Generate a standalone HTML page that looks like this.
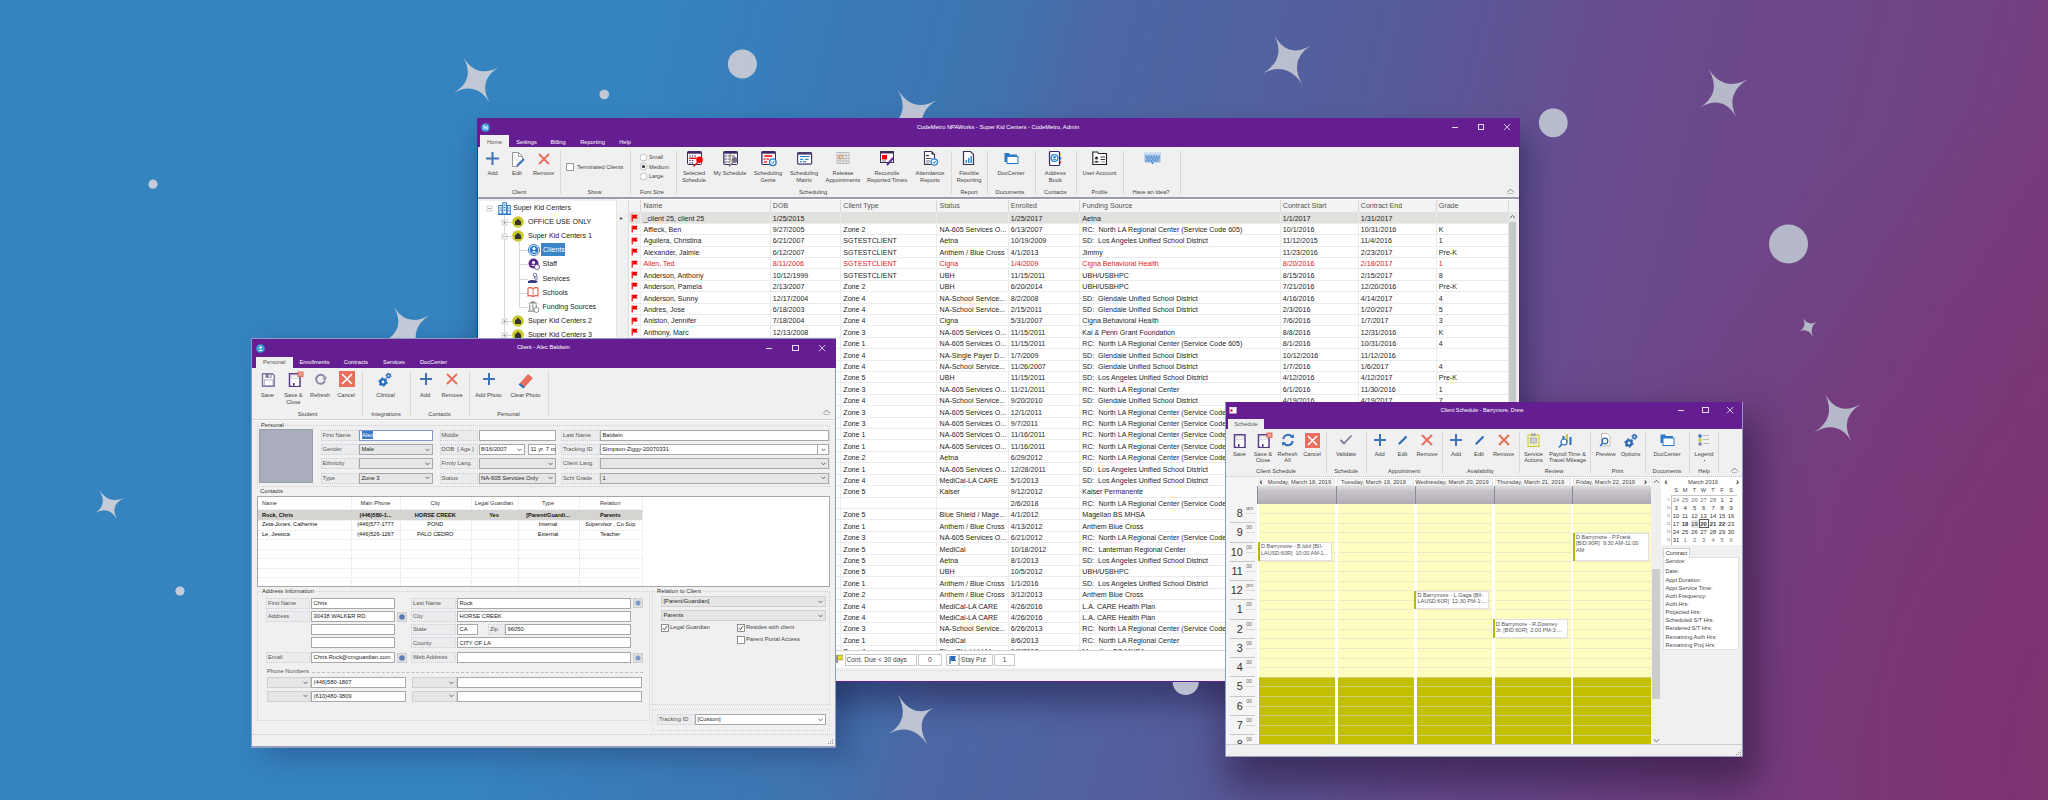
<!DOCTYPE html><html><head><meta charset="utf-8"><style>*{margin:0;padding:0;box-sizing:border-box}html,body{width:2048px;height:800px;overflow:hidden}body{position:relative;font-family:"Liberation Sans",sans-serif;background:radial-gradient(ellipse 520px 620px at 2048px 720px,rgba(126,50,114,.85) 0%,rgba(126,50,114,.5) 45%,rgba(126,50,114,0) 100%),linear-gradient(104deg,#3584c0 0%,#3584c0 29%,#387cb8 35.9%,#3f74b0 44.7%,#4c67a4 49.4%,#4f64a2 53.6%,#575b99 62.7%,#6a4a8e 73.9%,#6e4585 85%,#763c7d 93%,#7c3472 100%)}.a{position:absolute}.t{position:absolute;white-space:pre;line-height:1}svg.a{overflow:visible}</style></head><body>
<div class="a" style="left:477.00px;top:118.00px;width:1043.00px;height:564.00px;box-shadow:6px 20px 26px 2px rgba(30,25,70,.48)"></div>
<div class="a" style="left:251.00px;top:338.00px;width:585.00px;height:410.00px;box-shadow:14px 8px 26px 0px rgba(30,25,70,.32)"></div>
<div class="a" style="left:1225.00px;top:401.50px;width:518.00px;height:355.50px;box-shadow:8px 22px 36px 6px rgba(40,20,60,.6)"></div>
<svg class="a" style="left:0;top:0" width="2048" height="800"><defs><linearGradient id="sg" gradientUnits="userSpaceOnUse" x1="0" y1="0" x2="2048" y2="0"><stop offset="0" stop-color="#c6cdd9"/><stop offset="0.5" stop-color="#bcc2d2"/><stop offset="1" stop-color="#b2b5c6"/></linearGradient></defs><g fill="url(#sg)"><path d="M463.3,57.2 Q476.7,79.2 499.0,67.0 Q477.2,80.1 489.6,102.7 Q476.3,80.6 454.0,92.7 Q475.8,79.7 463.3,57.2Z"/><path d="M1274.4,35.6 Q1287.7,59.0 1310.6,45.4 Q1288.2,60.0 1302.5,84.8 Q1287.2,60.6 1262.3,73.5 Q1286.7,59.6 1274.4,35.6Z"/><path d="M1708.5,69.0 Q1723.6,92.5 1748.5,79.0 Q1724.1,93.5 1736.5,117.5 Q1723.2,94.0 1700.0,107.5 Q1722.6,93.0 1708.5,69.0Z"/><path d="M1802.5,317.5 Q1808.2,326.7 1817.5,321.5 Q1808.4,327.1 1813.5,337.5 Q1808.0,327.3 1799.0,331.5 Q1807.8,326.9 1802.5,317.5Z"/><path d="M1825.0,394.0 Q1838.1,417.2 1861.0,404.0 Q1838.6,418.2 1851.5,441.5 Q1837.7,418.8 1814.0,432.5 Q1837.1,417.8 1825.0,394.0Z"/><path d="M99.0,490.0 Q108.9,504.6 124.0,498.0 Q109.2,505.1 117.0,519.0 Q108.6,505.4 95.0,513.0 Q108.3,504.9 99.0,490.0Z"/><path d="M897.6,694.0 Q912.2,719.4 933.8,707.5 Q912.8,720.4 928.0,745.4 Q911.9,721.0 888.8,733.8 Q911.3,719.9 897.6,694.0Z"/><path d="M897.7,89.6 Q912.4,113.7 937.0,100.0 Q913.0,114.7 926.6,139.6 Q912.0,115.3 887.5,128.7 Q911.4,114.3 897.7,89.6Z"/><path d="M394.0,307.0 Q407.2,328.3 430.0,315.0 Q407.7,329.2 420.0,352.0 Q406.8,329.7 384.0,342.0 Q406.3,328.8 394.0,307.0Z"/><circle cx="742.4" cy="64" r="14.5"/><circle cx="604.3" cy="94.5" r="4.8"/><circle cx="1553.3" cy="122.8" r="14.4"/><circle cx="1788.5" cy="244" r="19.5"/><circle cx="153" cy="184.2" r="4.6"/><circle cx="180" cy="591" r="4.6"/><circle cx="1185.7" cy="682" r="13"/></g></svg>
<div class="a" style="left:477.00px;top:118.00px;width:1043.00px;height:564.00px;background:#f0f0f0;"></div>
<div class="a" style="left:477.00px;top:118.00px;width:1043.00px;height:29.00px;background:#641e91;"></div>
<svg class="a" style="left:481.00px;top:123.00px" width="9" height="9" viewBox="0 0 9 9"><circle cx="4.5" cy="4.5" r="4.3" fill="#3aa0da"/><path d="M3,6.5 V2.5 L6,6.5 V2.5" stroke="#fff" stroke-width="1" fill="none"/></svg>
<div class="t " style="top:124.90px;font-size:5.75px;color:#fff;left:998.00px;transform:translateX(-50%);">CodeMetro NPAWorks - Super Kid Centers - CodeMetro, Admin</div>
<div class="a" style="left:1451.50px;top:127.00px;width:6.00px;height:1.00px;background:#e4dcec;"></div>
<div class="a" style="left:1477.80px;top:123.80px;width:6.50px;height:6.50px;border:1px solid #e4dcec;"></div>
<svg class="a" style="left:1503.50px;top:123.90px" width="6.2" height="6.2" viewBox="0 0 6.2 6.2"><path d="M0,0 L6.2,6.2 M6.2,0 L0,6.2" stroke="#e4dcec" stroke-width="0.9"/></svg>
<div class="a" style="left:480.00px;top:135.00px;width:29.00px;height:12.00px;background:#f0f0f0;"></div>
<div class="t " style="top:139.72px;font-size:5.7px;color:#555;left:494.50px;transform:translateX(-50%);">Home</div>
<div class="t " style="top:139.72px;font-size:5.7px;color:#fff;left:526.50px;transform:translateX(-50%);">Settings</div>
<div class="t " style="top:139.72px;font-size:5.7px;color:#fff;left:558.00px;transform:translateX(-50%);">Billing</div>
<div class="t " style="top:139.72px;font-size:5.7px;color:#fff;left:592.50px;transform:translateX(-50%);">Reporting</div>
<div class="t " style="top:139.72px;font-size:5.7px;color:#fff;left:625.00px;transform:translateX(-50%);">Help</div>
<div class="a" style="left:477.00px;top:147.00px;width:1043.00px;height:50.00px;background:#f0f0f0;"></div>
<div class="a" style="left:477.00px;top:197.00px;width:1043.00px;height:2.00px;background:#9a9ab0;"></div>
<div class="a" style="left:560.00px;top:151.00px;width:1.00px;height:43.00px;background:#d8d8d8;"></div>
<div class="a" style="left:629.50px;top:151.00px;width:1.00px;height:43.00px;background:#d8d8d8;"></div>
<div class="a" style="left:676.00px;top:151.00px;width:1.00px;height:43.00px;background:#d8d8d8;"></div>
<div class="a" style="left:950.50px;top:151.00px;width:1.00px;height:43.00px;background:#d8d8d8;"></div>
<div class="a" style="left:987.00px;top:151.00px;width:1.00px;height:43.00px;background:#d8d8d8;"></div>
<div class="a" style="left:1035.00px;top:151.00px;width:1.00px;height:43.00px;background:#d8d8d8;"></div>
<div class="a" style="left:1076.40px;top:151.00px;width:1.00px;height:43.00px;background:#d8d8d8;"></div>
<div class="a" style="left:1122.80px;top:151.00px;width:1.00px;height:43.00px;background:#d8d8d8;"></div>
<div class="a" style="left:1179.70px;top:151.00px;width:1.00px;height:43.00px;background:#d8d8d8;"></div>
<svg class="a" style="left:486.00px;top:152.00px" width="13" height="13" viewBox="0 0 13 13"><path d="M6.5,0 V13 M0,6.5 H13" stroke="#3d73b6" stroke-width="2"/></svg>
<div class="t " style="top:171.22px;font-size:5.7px;color:#444;left:492.50px;transform:translateX(-50%);">Add</div>
<svg class="a" style="left:511.00px;top:151.50px" width="14" height="15" viewBox="0 0 14 15"><path d="M1.5,0.5 H7.5 L11.5,4.5 V10 M1.5,0.5 V14.5 H7" fill="#fff" stroke="#999" stroke-width="1"/><path d="M7.5,0.5 V4.5 H11.5" fill="none" stroke="#999"/><path d="M6,14 L13,7" stroke="#3d73b6" stroke-width="2.2"/></svg>
<div class="t " style="top:171.22px;font-size:5.7px;color:#444;left:517.00px;transform:translateX(-50%);">Edit</div>
<svg class="a" style="left:537.50px;top:152.50px" width="12" height="12" viewBox="0 0 12 12"><path d="M1,1 L11,11 M11,1 L1,11" stroke="#e8705f" stroke-width="2"/></svg>
<div class="t " style="top:171.22px;font-size:5.7px;color:#444;left:543.50px;transform:translateX(-50%);">Remove</div>
<div class="t " style="top:189.72px;font-size:5.7px;color:#444;left:519.00px;transform:translateX(-50%);">Client</div>
<div class="a" style="left:566.00px;top:163.00px;width:8.00px;height:8.00px;background:#fff;border:1px solid #999;"></div>
<div class="t " style="top:164.76px;font-size:5.6px;color:#444;left:577.00px;">Terminated Clients</div>
<div class="t " style="top:189.72px;font-size:5.7px;color:#444;left:594.50px;transform:translateX(-50%);">Show</div>
<svg class="a" style="left:639.00px;top:153.00px" width="9" height="9" viewBox="0 0 9 9"><circle cx="4.5" cy="4.5" r="3.4" fill="#fff" stroke="#aaa" stroke-width="0.7"/></svg>
<div class="t " style="top:155.26px;font-size:5.6px;color:#444;left:649.00px;">Small</div>
<svg class="a" style="left:639.00px;top:162.30px" width="9" height="9" viewBox="0 0 9 9"><circle cx="4.5" cy="4.5" r="3.4" fill="#fff" stroke="#aaa" stroke-width="0.7"/><circle cx="4.5" cy="4.5" r="1.6" fill="#333"/></svg>
<div class="t " style="top:164.56px;font-size:5.6px;color:#444;left:649.00px;">Medium</div>
<svg class="a" style="left:639.00px;top:171.60px" width="9" height="9" viewBox="0 0 9 9"><circle cx="4.5" cy="4.5" r="3.4" fill="#fff" stroke="#aaa" stroke-width="0.7"/></svg>
<div class="t " style="top:173.86px;font-size:5.6px;color:#444;left:649.00px;">Large</div>
<div class="t " style="top:189.72px;font-size:5.7px;color:#444;left:652.00px;transform:translateX(-50%);">Font Size</div>
<svg class="a" style="left:686.50px;top:150.60px" width="16" height="15" viewBox="0 0 16 15"><rect x="0.5" y="0.5" width="14" height="13" rx="1" fill="#fff" stroke="#3b2a60" stroke-width="1"/><rect x="0.5" y="0.5" width="14" height="2.2" fill="#3b2a60"/><g fill="#4a3a7a"><circle cx="3" cy="5" r="0.8"/><circle cx="5.5" cy="5" r="0.8"/><circle cx="8" cy="5" r="0.8"/><circle cx="3" cy="9.5" r="0.8"/><circle cx="5.5" cy="9.5" r="0.8"/><circle cx="3" cy="12" r="0.8"/><circle cx="5.5" cy="12" r="0.8"/></g><rect x="2.2" y="6.6" width="7" height="1.4" fill="#e00"/><circle cx="12.5" cy="8.8" r="3.3" fill="#f00"/><path d="M11,11 L6.5,15.5" stroke="#f00" stroke-width="1.3"/></svg>
<div class="t " style="top:171.22px;font-size:5.7px;color:#444;left:694.00px;transform:translateX(-50%);">Selected</div>
<div class="t " style="top:178.42px;font-size:5.7px;color:#444;left:694.00px;transform:translateX(-50%);">Schedule</div>
<svg class="a" style="left:722.50px;top:150.60px" width="16" height="15" viewBox="0 0 16 15"><rect x="0.5" y="0.5" width="14" height="13" rx="1" fill="#fff" stroke="#3b2a60" stroke-width="1"/><rect x="0.5" y="0.5" width="14" height="2.2" fill="#3b2a60"/><rect x="0.5" y="2.5" width="1.6" height="11" fill="#8a8ab0"/><g fill="#4a3a7a"><circle cx="3" cy="5" r="0.8"/><circle cx="3" cy="8" r="0.8"/><circle cx="3" cy="11" r="0.8"/><circle cx="11" cy="5" r="0.8"/></g><path d="M4.5,5 H10 M4.5,8 H8 M4.5,11 H7" stroke="#555" stroke-width="0.9"/><rect x="6.2" y="3" width="1.4" height="9" fill="#a89a90"/><circle cx="11.5" cy="9" r="3" fill="#7a7080"/><path d="M10,11 L6,15.5" stroke="#8a8090" stroke-width="1.2"/></svg>
<div class="t " style="top:171.22px;font-size:5.7px;color:#444;left:730.00px;transform:translateX(-50%);">My Schedule</div>
<svg class="a" style="left:760.50px;top:150.60px" width="16" height="15" viewBox="0 0 16 15"><rect x="0.5" y="0.5" width="14" height="13" rx="1" fill="#fff" stroke="#3b2a60" stroke-width="1"/><rect x="0.5" y="0.5" width="14" height="2.2" fill="#3b2a60"/><rect x="0.5" y="2.5" width="1.6" height="11" fill="#8a8ab0"/><rect x="3" y="4.3" width="8.5" height="1.5" rx="0.7" fill="#f00"/><rect x="2.5" y="7.5" width="2" height="1.2" fill="#f00"/><rect x="5.5" y="7.5" width="2.5" height="1.2" fill="#f00"/><rect x="3" y="10.3" width="3" height="1.3" fill="#f00"/><circle cx="11.8" cy="11.2" r="3.3" fill="#fff" stroke="#1a7ad0" stroke-width="1.3"/><path d="M10.3,11 L11.6,12.4 L13.4,10" stroke="#1a7ad0" fill="none" stroke-width="1"/></svg>
<div class="t " style="top:171.22px;font-size:5.7px;color:#444;left:768.00px;transform:translateX(-50%);">Scheduling</div>
<div class="t " style="top:178.42px;font-size:5.7px;color:#444;left:768.00px;transform:translateX(-50%);">Genie</div>
<svg class="a" style="left:796.50px;top:150.60px" width="16" height="15" viewBox="0 0 16 15"><rect x="0.6" y="1.6" width="14" height="11.5" rx="1" fill="#fff" stroke="#4a3a6a" stroke-width="1.2"/><rect x="0.6" y="1.6" width="14" height="2" fill="#4a3a6a"/><rect x="3" y="5" width="9.5" height="1.1" fill="#2a7ad0"/><rect x="3" y="7.8" width="3.5" height="1.1" fill="#2a7ad0"/><rect x="8" y="7.8" width="3.5" height="1.1" fill="#2a7ad0"/><rect x="3" y="10.2" width="2" height="1.1" fill="#2a7ad0"/><rect x="6" y="10.2" width="3" height="1.1" fill="#2a7ad0"/></svg>
<div class="t " style="top:171.22px;font-size:5.7px;color:#444;left:804.00px;transform:translateX(-50%);">Scheduling</div>
<div class="t " style="top:178.42px;font-size:5.7px;color:#444;left:804.00px;transform:translateX(-50%);">Matrix</div>
<svg class="a" style="left:835.50px;top:150.60px" width="16" height="15" viewBox="0 0 16 15"><g stroke="#aaa" stroke-width="0.7" fill="none"><rect x="1" y="1.5" width="12" height="11"/><path d="M1,4.5 H13 M1,7.5 H13 M1,10 H13 M4,1.5 V12.5 M7,1.5 V12.5 M10,1.5 V12.5"/></g><circle cx="4.5" cy="6" r="1.8" fill="none" stroke="#e84" stroke-width="1"/></svg>
<div class="t " style="top:171.22px;font-size:5.7px;color:#444;left:843.00px;transform:translateX(-50%);">Release</div>
<div class="t " style="top:178.42px;font-size:5.7px;color:#444;left:843.00px;transform:translateX(-50%);">Appointments</div>
<svg class="a" style="left:879.50px;top:150.60px" width="16" height="15" viewBox="0 0 16 15"><rect x="0.5" y="0.5" width="13" height="11" fill="#fff" stroke="#3b3050" stroke-width="1"/><rect x="0.5" y="0.5" width="13" height="2" fill="#3b3050"/><rect x="2" y="4" width="5" height="4.5" fill="#e00"/><path d="M2,10 H6" stroke="#777"/><path d="M7,14 L13,7" stroke="#5a2a9a" stroke-width="2"/></svg>
<div class="t " style="top:171.22px;font-size:5.7px;color:#444;left:887.00px;transform:translateX(-50%);">Reconcile</div>
<div class="t " style="top:178.42px;font-size:5.7px;color:#444;left:887.00px;transform:translateX(-50%);">Reported Times</div>
<svg class="a" style="left:922.50px;top:150.60px" width="16" height="15" viewBox="0 0 16 15"><path d="M1.5,0.5 H8.5 L11.5,3.5 V13.5 H1.5 Z" fill="#fff" stroke="#3b3050" stroke-width="1.1"/><path d="M8.5,0.5 V3.5 H11.5 Z" fill="#3b3050"/><path d="M3,4.5 H6" stroke="#222" stroke-width="1.1"/><path d="M3,7.5 H8.5" stroke="#3b3050" stroke-width="0.9"/><path d="M3,10 H7" stroke="#6a4a9a" stroke-width="0.9"/><path d="M3,12 H6" stroke="#777" stroke-width="0.9"/><circle cx="11.2" cy="11" r="3.2" fill="#fff" stroke="#1a7ad0" stroke-width="1.2"/><path d="M9.8,11 L11,12.3 L12.7,10" stroke="#1a7ad0" fill="none" stroke-width="1"/></svg>
<div class="t " style="top:171.22px;font-size:5.7px;color:#444;left:930.00px;transform:translateX(-50%);">Attendance</div>
<div class="t " style="top:178.42px;font-size:5.7px;color:#444;left:930.00px;transform:translateX(-50%);">Reports</div>
<svg class="a" style="left:961.50px;top:150.60px" width="16" height="15" viewBox="0 0 16 15"><path d="M1.5,0.5 H8.5 L11.5,3.5 V13.5 H1.5 Z" fill="#fff" stroke="#3b3050" stroke-width="1.2"/><rect x="3.5" y="9" width="1.5" height="3" fill="#2a8ad0"/><rect x="6" y="7" width="1.5" height="5" fill="#2a8ad0"/><rect x="8.5" y="5" width="1.5" height="7" fill="#2a8ad0"/></svg>
<div class="t " style="top:171.22px;font-size:5.7px;color:#444;left:969.00px;transform:translateX(-50%);">Flexible</div>
<div class="t " style="top:178.42px;font-size:5.7px;color:#444;left:969.00px;transform:translateX(-50%);">Reporting</div>
<svg class="a" style="left:1003.50px;top:150.60px" width="16" height="15" viewBox="0 0 16 15"><path d="M0.5,2 H5 L6,3.5 H13 V11 H0.5 Z" fill="#2a7ac8"/><rect x="3" y="5.5" width="11" height="7" fill="#fff" stroke="#2a7ac8" stroke-width="1"/></svg>
<div class="t " style="top:171.22px;font-size:5.7px;color:#444;left:1011.00px;transform:translateX(-50%);">DocCenter</div>
<svg class="a" style="left:1047.80px;top:150.60px" width="16" height="15" viewBox="0 0 16 15"><rect x="1.5" y="0.5" width="10" height="14" rx="1" fill="#fff" stroke="#3b2a60" stroke-width="1.2"/><circle cx="6.5" cy="7" r="3.4" fill="#fff" stroke="#2a8ad0" stroke-width="1.3"/><circle cx="6.5" cy="6.2" r="1.3" fill="#2a8ad0"/><path d="M4.3,9 Q6.5,6.8 8.7,9 Z" fill="#2a8ad0"/><rect x="12" y="2" width="1.3" height="2.5" fill="#e8d020"/><rect x="12" y="6" width="1.3" height="2.5" fill="#2a8ad0"/><rect x="12" y="10" width="1.3" height="2.5" fill="#e05050"/></svg>
<div class="t " style="top:171.22px;font-size:5.7px;color:#444;left:1055.30px;transform:translateX(-50%);">Address</div>
<div class="t " style="top:178.42px;font-size:5.7px;color:#444;left:1055.30px;transform:translateX(-50%);">Book</div>
<svg class="a" style="left:1092.00px;top:150.60px" width="16" height="15" viewBox="0 0 16 15"><path d="M0.8,1 H5.5 L6.5,2.5 H14.5 V13.5 H0.8 Z" fill="#fff" stroke="#222" stroke-width="1.1"/><circle cx="4.5" cy="7" r="1.5" fill="#222"/><path d="M2,11.5 Q4.5,7.8 7,11.5 Z" fill="#222"/><path d="M8.5,6 H13 M8.5,8.5 H13" stroke="#222" stroke-width="0.9"/><path d="M8.5,11 H13" stroke="#888" stroke-width="0.9"/></svg>
<div class="t " style="top:171.22px;font-size:5.7px;color:#444;left:1099.50px;transform:translateX(-50%);">User Account</div>
<svg class="a" style="left:1143.50px;top:150.60px" width="16" height="15" viewBox="0 0 16 15"><rect x="0.5" y="1" width="16" height="10.5" rx="1.2" fill="#9ab8e0"/><rect x="0.5" y="1" width="16" height="2.6" fill="#d0e0f4"/><g fill="#2a78c8"><circle cx="2.5" cy="6" r="0.7"/><circle cx="5" cy="6" r="0.7"/><circle cx="7.5" cy="6" r="0.7"/><circle cx="10" cy="6" r="0.7"/><circle cx="12.5" cy="6" r="0.7"/><circle cx="15" cy="6" r="0.7"/><circle cx="3.7" cy="8" r="0.7"/><circle cx="6.2" cy="8" r="0.7"/><circle cx="8.7" cy="8" r="0.7"/><circle cx="11.2" cy="8" r="0.7"/><circle cx="13.7" cy="8" r="0.7"/><circle cx="2.5" cy="10" r="0.7"/><circle cx="5" cy="10" r="0.7"/><circle cx="7.5" cy="10" r="0.7"/><circle cx="10" cy="10" r="0.7"/><circle cx="12.5" cy="10" r="0.7"/></g><path d="M7,11.5 L8.5,13.5 L10,11.5 Z" fill="#2a78c8"/></svg>
<div class="t " style="top:189.72px;font-size:5.7px;color:#444;left:813.00px;transform:translateX(-50%);">Scheduling</div>
<div class="t " style="top:189.72px;font-size:5.7px;color:#444;left:969.00px;transform:translateX(-50%);">Report</div>
<div class="t " style="top:189.72px;font-size:5.7px;color:#444;left:1010.00px;transform:translateX(-50%);">Documents</div>
<div class="t " style="top:189.72px;font-size:5.7px;color:#444;left:1055.30px;transform:translateX(-50%);">Contacts</div>
<div class="t " style="top:189.72px;font-size:5.7px;color:#444;left:1099.50px;transform:translateX(-50%);">Profile</div>
<div class="t " style="top:189.72px;font-size:5.7px;color:#444;left:1151.00px;transform:translateX(-50%);">Have an Idea?</div>
<svg class="a" style="left:1506.00px;top:187.00px" width="9" height="7" viewBox="0 0 9 7"><path d="M1,5.5 L4.5,2 L8,5.5" stroke="#888" fill="none" stroke-width="1"/><path d="M2,6.5 H7" stroke="#aaa" stroke-width="0.8"/></svg>
<div class="a" style="left:478.00px;top:199.00px;width:138.00px;height:451.00px;background:#f0f0f0;"></div>
<div class="a" style="left:480.00px;top:201.00px;width:136.00px;height:449.00px;background:#fff;"></div>
<div class="a" style="left:616.00px;top:199.00px;width:2.00px;height:451.00px;background:#e4e4e4;"></div>
<div class="a" style="left:504.00px;top:213.00px;width:1.00px;height:127.00px;background:#d8d8d8;"></div>
<div class="a" style="left:519.00px;top:242.00px;width:1.00px;height:65.00px;background:#d8d8d8;"></div>
<div class="a" style="left:504.00px;top:222.00px;width:8.00px;height:1.00px;background:#d8d8d8;"></div>
<div class="a" style="left:504.00px;top:236.00px;width:8.00px;height:1.00px;background:#d8d8d8;"></div>
<div class="a" style="left:504.00px;top:321.00px;width:8.00px;height:1.00px;background:#d8d8d8;"></div>
<div class="a" style="left:504.00px;top:335.00px;width:8.00px;height:1.00px;background:#d8d8d8;"></div>
<div class="a" style="left:519.00px;top:250.00px;width:9.00px;height:1.00px;background:#d8d8d8;"></div>
<div class="a" style="left:519.00px;top:264.00px;width:9.00px;height:1.00px;background:#d8d8d8;"></div>
<div class="a" style="left:519.00px;top:278.50px;width:9.00px;height:1.00px;background:#d8d8d8;"></div>
<div class="a" style="left:519.00px;top:292.60px;width:9.00px;height:1.00px;background:#d8d8d8;"></div>
<div class="a" style="left:519.00px;top:306.80px;width:9.00px;height:1.00px;background:#d8d8d8;"></div>
<svg class="a" style="left:485.50px;top:204.50px" width="7" height="7" viewBox="0 0 7 7"><rect x="1" y="1" width="5" height="5" fill="#fff" stroke="#bbb" stroke-width="0.7"/><path d="M2,3.5 H5" stroke="#888" stroke-width="0.7"/></svg>
<svg class="a" style="left:500.50px;top:218.50px" width="7" height="7" viewBox="0 0 7 7"><rect x="1" y="1" width="5" height="5" fill="#fff" stroke="#bbb" stroke-width="0.7"/><path d="M2,3.5 H5" stroke="#888" stroke-width="0.7"/><path d="M3.5,2 V5" stroke="#888" stroke-width="0.7"/></svg>
<svg class="a" style="left:500.50px;top:232.50px" width="7" height="7" viewBox="0 0 7 7"><rect x="1" y="1" width="5" height="5" fill="#fff" stroke="#bbb" stroke-width="0.7"/><path d="M2,3.5 H5" stroke="#888" stroke-width="0.7"/></svg>
<svg class="a" style="left:500.50px;top:317.50px" width="7" height="7" viewBox="0 0 7 7"><rect x="1" y="1" width="5" height="5" fill="#fff" stroke="#bbb" stroke-width="0.7"/><path d="M2,3.5 H5" stroke="#888" stroke-width="0.7"/><path d="M3.5,2 V5" stroke="#888" stroke-width="0.7"/></svg>
<svg class="a" style="left:500.50px;top:331.50px" width="7" height="7" viewBox="0 0 7 7"><rect x="1" y="1" width="5" height="5" fill="#fff" stroke="#bbb" stroke-width="0.7"/><path d="M2,3.5 H5" stroke="#888" stroke-width="0.7"/><path d="M3.5,2 V5" stroke="#888" stroke-width="0.7"/></svg>
<svg class="a" style="left:498.00px;top:201.50px" width="13" height="13" viewBox="0 0 13 13"><g fill="#fff" stroke="#2a78c8" stroke-width="1"><rect x="0.8" y="3.5" width="3.2" height="9"/><rect x="4.8" y="0.8" width="3.6" height="11.7"/><rect x="9.2" y="3.5" width="3" height="9"/></g><g fill="#2a78c8"><rect x="5.8" y="2.5" width="1.6" height="1.2"/><rect x="5.8" y="5" width="1.6" height="1.2"/><rect x="5.8" y="7.5" width="1.6" height="1.2"/><rect x="1.8" y="5.5" width="1.2" height="1"/><rect x="10.1" y="5.5" width="1.2" height="1"/><rect x="1.8" y="8" width="1.2" height="1"/><rect x="10.1" y="8" width="1.2" height="1"/><rect x="0" y="11.5" width="13" height="1.5"/></g></svg>
<div class="t " style="top:205.16px;font-size:7.1px;color:#222;left:513.00px;">Super Kid Centers</div>
<svg class="a" style="left:512.00px;top:216.00px" width="12" height="12" viewBox="0 0 12 12"><circle cx="6" cy="6" r="5.8" fill="#c8c828"/><path d="M3,9 V5.5 L6,2.8 L9,5.5 V9 Z" fill="#333"/></svg>
<div class="t " style="top:219.16px;font-size:7.1px;color:#222;left:528.00px;">OFFICE USE ONLY</div>
<svg class="a" style="left:512.00px;top:230.00px" width="12" height="12" viewBox="0 0 12 12"><circle cx="6" cy="6" r="5.8" fill="#c8c828"/><path d="M3,9 V5.5 L6,2.8 L9,5.5 V9 Z" fill="#333"/></svg>
<div class="t " style="top:233.16px;font-size:7.1px;color:#222;left:528.00px;">Super Kid Centers 1</div>
<svg class="a" style="left:512.00px;top:315.00px" width="12" height="12" viewBox="0 0 12 12"><circle cx="6" cy="6" r="5.8" fill="#c8c828"/><path d="M3,9 V5.5 L6,2.8 L9,5.5 V9 Z" fill="#333"/></svg>
<div class="t " style="top:318.16px;font-size:7.1px;color:#222;left:528.00px;">Super Kid Centers 2</div>
<svg class="a" style="left:512.00px;top:329.00px" width="12" height="12" viewBox="0 0 12 12"><circle cx="6" cy="6" r="5.8" fill="#c8c828"/><path d="M3,9 V5.5 L6,2.8 L9,5.5 V9 Z" fill="#333"/></svg>
<div class="t " style="top:332.16px;font-size:7.1px;color:#222;left:528.00px;">Super Kid Centers 3</div>
<svg class="a" style="left:528.00px;top:244.00px" width="12" height="12" viewBox="0 0 12 12"><circle cx="6" cy="6" r="5.5" fill="#fff" stroke="#2a78c8" stroke-width="1"/><circle cx="6" cy="6" r="4.3" fill="#2a78c8"/><circle cx="6" cy="4.5" r="1.5" fill="#fff"/><path d="M3.5,8.5 Q6,5.5 8.5,8.5 Z" fill="#fff"/></svg>
<div class="a" style="left:541.00px;top:243.40px;width:24.00px;height:13.10px;background:#3a84c8;"></div>
<div class="t " style="top:247.16px;font-size:7.1px;color:#fff;left:543.00px;">Clients</div>
<svg class="a" style="left:528.00px;top:258.00px" width="12" height="12" viewBox="0 0 12 12"><circle cx="5.5" cy="5.5" r="5" fill="#5a2a8a"/><circle cx="5.5" cy="4.5" r="1.6" fill="#fff"/><path d="M3,8 Q5.5,5.5 8,8 Z" fill="#fff"/><circle cx="9" cy="9" r="2.5" fill="#fff" stroke="#5a2a8a" stroke-width="0.8"/></svg>
<div class="t " style="top:261.16px;font-size:7.1px;color:#222;left:542.50px;">Staff</div>
<svg class="a" style="left:527.00px;top:272.00px" width="12" height="12" viewBox="0 0 12 12"><path d="M1,9 Q5,7 11,9 L9,11 H1 Z" fill="#3a3a7a"/><circle cx="8" cy="3" r="1.8" fill="none" stroke="#5a5a9a" stroke-width="0.8"/><circle cx="9" cy="6" r="1.5" fill="none" stroke="#5a5a9a" stroke-width="0.8"/></svg>
<div class="t " style="top:275.66px;font-size:7.1px;color:#222;left:542.50px;">Services</div>
<svg class="a" style="left:527.00px;top:286.00px" width="12" height="12" viewBox="0 0 12 12"><path d="M1,2 Q3.5,1 6,2.5 Q8.5,1 11,2 V10 Q8.5,9 6,10.5 Q3.5,9 1,10 Z" fill="#fff" stroke="#e05a4a" stroke-width="1.1"/><path d="M6,2.5 V10.5" stroke="#e05a4a" stroke-width="0.8"/></svg>
<div class="t " style="top:289.76px;font-size:7.1px;color:#222;left:542.50px;">Schools</div>
<svg class="a" style="left:527.00px;top:300.00px" width="12" height="13" viewBox="0 0 12 13"><path d="M1,3.5 L6,1 L11,3.5 Z" fill="#888"/><g fill="#999"><rect x="2" y="4.5" width="1.3" height="6"/><rect x="5.3" y="4.5" width="1.3" height="6"/><rect x="8.6" y="4.5" width="1.3" height="6"/></g><rect x="1" y="10.5" width="10" height="1.2" fill="#888"/><circle cx="9.5" cy="10" r="2.5" fill="#fff" stroke="#777" stroke-width="0.8"/></svg>
<div class="t " style="top:303.96px;font-size:7.1px;color:#222;left:542.50px;">Funding Sources</div>
<div class="a" style="left:617.00px;top:199.00px;width:900.00px;height:451.00px;background:#fff;"></div>
<div class="a" style="left:617.00px;top:199.50px;width:900.00px;height:12.50px;background:#f3f3f3;"></div>
<div class="a" style="left:617.00px;top:211.50px;width:891.00px;height:0;border-top:1px dotted #a8b0c8"></div>
<div class="a" style="left:628.00px;top:199.50px;width:1.00px;height:12.50px;background:#d8d8d8;"></div>
<div class="a" style="left:640.20px;top:199.50px;width:1.00px;height:12.50px;background:#d8d8d8;"></div>
<div class="a" style="left:769.50px;top:199.50px;width:1.00px;height:12.50px;background:#d8d8d8;"></div>
<div class="a" style="left:840.00px;top:199.50px;width:1.00px;height:12.50px;background:#d8d8d8;"></div>
<div class="a" style="left:936.30px;top:199.50px;width:1.00px;height:12.50px;background:#d8d8d8;"></div>
<div class="a" style="left:1007.50px;top:199.50px;width:1.00px;height:12.50px;background:#d8d8d8;"></div>
<div class="a" style="left:1079.00px;top:199.50px;width:1.00px;height:12.50px;background:#d8d8d8;"></div>
<div class="a" style="left:1279.50px;top:199.50px;width:1.00px;height:12.50px;background:#d8d8d8;"></div>
<div class="a" style="left:1357.50px;top:199.50px;width:1.00px;height:12.50px;background:#d8d8d8;"></div>
<div class="a" style="left:1435.50px;top:199.50px;width:1.00px;height:12.50px;background:#d8d8d8;"></div>
<div class="a" style="left:1508.00px;top:199.50px;width:1.00px;height:12.50px;background:#d8d8d8;"></div>
<div class="t " style="top:202.96px;font-size:7.1px;color:#555;left:643.50px;">Name</div>
<div class="t " style="top:202.96px;font-size:7.1px;color:#555;left:772.80px;">DOB</div>
<div class="t " style="top:202.96px;font-size:7.1px;color:#555;left:843.30px;">Client Type</div>
<div class="t " style="top:202.96px;font-size:7.1px;color:#555;left:939.60px;">Status</div>
<div class="t " style="top:202.96px;font-size:7.1px;color:#555;left:1010.80px;">Enrolled</div>
<div class="t " style="top:202.96px;font-size:7.1px;color:#555;left:1082.30px;">Funding Source</div>
<div class="t " style="top:202.96px;font-size:7.1px;color:#555;left:1282.80px;">Contract Start</div>
<div class="t " style="top:202.96px;font-size:7.1px;color:#555;left:1360.80px;">Contract End</div>
<div class="t " style="top:202.96px;font-size:7.1px;color:#555;left:1438.80px;">Grade</div>
<div class="a" style="left:617.00px;top:211.80px;width:11.00px;height:438.20px;background:#f0f0f0;"></div>
<div class="a" style="left:628.00px;top:211.80px;width:1.00px;height:438.20px;background:#d8d8d8;"></div>
<div class="a" style="left:628.00px;top:211.80px;width:880.00px;height:11.41px;background:#e2e0dc;"></div>
<div class="t " style="top:215.40px;font-size:6px;color:#555;left:620.00px;">▸</div>
<div class="a" style="left:0;top:0;width:2048px;height:650px;overflow:hidden">
<div class="a" style="left:628.00px;top:222.71px;width:880.00px;height:1.00px;background:#ebebeb;"></div>
<svg class="a" style="left:631.00px;top:214.00px" width="8" height="8" viewBox="0 0 8 8"><path d="M1.2,0.5 V7.5" stroke="#e00" stroke-width="1.2"/><path d="M1.8,0.8 H6.8 L5.6,2.6 L6.8,4.4 H1.8 Z" fill="#e00"/></svg>
<div class="t " style="top:215.66px;font-size:7.1px;color:#1e1e1e;left:643.50px;">_client 25, client 25</div>
<div class="t " style="top:215.66px;font-size:7.1px;color:#1e1e1e;left:772.80px;">1/25/2015</div>
<div class="t " style="top:215.66px;font-size:7.1px;color:#1e1e1e;left:1010.80px;">1/25/2017</div>
<div class="t " style="top:215.66px;font-size:7.1px;color:#1e1e1e;left:1082.30px;">Aetna</div>
<div class="t " style="top:215.66px;font-size:7.1px;color:#1e1e1e;left:1282.80px;">1/1/2017</div>
<div class="t " style="top:215.66px;font-size:7.1px;color:#1e1e1e;left:1360.80px;">1/31/2017</div>
<div class="a" style="left:628.00px;top:234.12px;width:880.00px;height:1.00px;background:#ebebeb;"></div>
<svg class="a" style="left:631.00px;top:225.41px" width="8" height="8" viewBox="0 0 8 8"><path d="M1.2,0.5 V7.5" stroke="#e00" stroke-width="1.2"/><path d="M1.8,0.8 H6.8 L5.6,2.6 L6.8,4.4 H1.8 Z" fill="#e00"/></svg>
<div class="t " style="top:227.07px;font-size:7.1px;color:#1e1e1e;left:643.50px;">Affleck, Ben</div>
<div class="t " style="top:227.07px;font-size:7.1px;color:#1e1e1e;left:772.80px;">9/27/2005</div>
<div class="t " style="top:227.07px;font-size:7.1px;color:#1e1e1e;left:843.30px;">Zone 2</div>
<div class="t " style="top:227.07px;font-size:7.1px;color:#1e1e1e;left:939.60px;">NA-605 Services O...</div>
<div class="t " style="top:227.07px;font-size:7.1px;color:#1e1e1e;left:1010.80px;">6/13/2007</div>
<div class="t " style="top:227.07px;font-size:7.1px;color:#1e1e1e;left:1082.30px;">RC:  North LA Regional Center (Service Code 605)</div>
<div class="t " style="top:227.07px;font-size:7.1px;color:#1e1e1e;left:1282.80px;">10/1/2016</div>
<div class="t " style="top:227.07px;font-size:7.1px;color:#1e1e1e;left:1360.80px;">10/31/2016</div>
<div class="t " style="top:227.07px;font-size:7.1px;color:#1e1e1e;left:1438.80px;">K</div>
<div class="a" style="left:628.00px;top:245.52px;width:880.00px;height:1.00px;background:#ebebeb;"></div>
<svg class="a" style="left:631.00px;top:236.82px" width="8" height="8" viewBox="0 0 8 8"><path d="M1.2,0.5 V7.5" stroke="#e00" stroke-width="1.2"/><path d="M1.8,0.8 H6.8 L5.6,2.6 L6.8,4.4 H1.8 Z" fill="#e00"/></svg>
<div class="t " style="top:238.48px;font-size:7.1px;color:#1e1e1e;left:643.50px;">Aguilera, Christina</div>
<div class="t " style="top:238.48px;font-size:7.1px;color:#1e1e1e;left:772.80px;">6/21/2007</div>
<div class="t " style="top:238.48px;font-size:7.1px;color:#1e1e1e;left:843.30px;">SGTESTCLIENT</div>
<div class="t " style="top:238.48px;font-size:7.1px;color:#1e1e1e;left:939.60px;">Aetna</div>
<div class="t " style="top:238.48px;font-size:7.1px;color:#1e1e1e;left:1010.80px;">10/19/2009</div>
<div class="t " style="top:238.48px;font-size:7.1px;color:#1e1e1e;left:1082.30px;">SD:  Los Angeles Unified School District</div>
<div class="t " style="top:238.48px;font-size:7.1px;color:#1e1e1e;left:1282.80px;">11/12/2015</div>
<div class="t " style="top:238.48px;font-size:7.1px;color:#1e1e1e;left:1360.80px;">11/4/2016</div>
<div class="t " style="top:238.48px;font-size:7.1px;color:#1e1e1e;left:1438.80px;">1</div>
<div class="a" style="left:628.00px;top:256.93px;width:880.00px;height:1.00px;background:#ebebeb;"></div>
<svg class="a" style="left:631.00px;top:248.22px" width="8" height="8" viewBox="0 0 8 8"><path d="M1.2,0.5 V7.5" stroke="#e00" stroke-width="1.2"/><path d="M1.8,0.8 H6.8 L5.6,2.6 L6.8,4.4 H1.8 Z" fill="#e00"/></svg>
<div class="t " style="top:249.89px;font-size:7.1px;color:#1e1e1e;left:643.50px;">Alexander, Jaimie</div>
<div class="t " style="top:249.89px;font-size:7.1px;color:#1e1e1e;left:772.80px;">6/12/2007</div>
<div class="t " style="top:249.89px;font-size:7.1px;color:#1e1e1e;left:843.30px;">SGTESTCLIENT</div>
<div class="t " style="top:249.89px;font-size:7.1px;color:#1e1e1e;left:939.60px;">Anthem / Blue Cross</div>
<div class="t " style="top:249.89px;font-size:7.1px;color:#1e1e1e;left:1010.80px;">4/1/2013</div>
<div class="t " style="top:249.89px;font-size:7.1px;color:#1e1e1e;left:1082.30px;">Jimmy</div>
<div class="t " style="top:249.89px;font-size:7.1px;color:#1e1e1e;left:1282.80px;">11/23/2016</div>
<div class="t " style="top:249.89px;font-size:7.1px;color:#1e1e1e;left:1360.80px;">2/23/2017</div>
<div class="t " style="top:249.89px;font-size:7.1px;color:#1e1e1e;left:1438.80px;">Pre-K</div>
<div class="a" style="left:628.00px;top:268.34px;width:880.00px;height:1.00px;background:#ebebeb;"></div>
<svg class="a" style="left:631.00px;top:259.63px" width="8" height="8" viewBox="0 0 8 8"><path d="M1.2,0.5 V7.5" stroke="#e00" stroke-width="1.2"/><path d="M1.8,0.8 H6.8 L5.6,2.6 L6.8,4.4 H1.8 Z" fill="#e00"/></svg>
<div class="t " style="top:261.30px;font-size:7.1px;color:#e02020;left:643.50px;">Allen, Ted</div>
<div class="t " style="top:261.30px;font-size:7.1px;color:#e02020;left:772.80px;">8/11/2006</div>
<div class="t " style="top:261.30px;font-size:7.1px;color:#e02020;left:843.30px;">SGTESTCLIENT</div>
<div class="t " style="top:261.30px;font-size:7.1px;color:#e02020;left:939.60px;">Cigna</div>
<div class="t " style="top:261.30px;font-size:7.1px;color:#e02020;left:1010.80px;">1/4/2009</div>
<div class="t " style="top:261.30px;font-size:7.1px;color:#e02020;left:1082.30px;">Cigna Behavioral Health</div>
<div class="t " style="top:261.30px;font-size:7.1px;color:#e02020;left:1282.80px;">8/20/2016</div>
<div class="t " style="top:261.30px;font-size:7.1px;color:#e02020;left:1360.80px;">2/18/2017</div>
<div class="t " style="top:261.30px;font-size:7.1px;color:#e02020;left:1438.80px;">1</div>
<div class="a" style="left:628.00px;top:279.75px;width:880.00px;height:1.00px;background:#ebebeb;"></div>
<svg class="a" style="left:631.00px;top:271.04px" width="8" height="8" viewBox="0 0 8 8"><path d="M1.2,0.5 V7.5" stroke="#e00" stroke-width="1.2"/><path d="M1.8,0.8 H6.8 L5.6,2.6 L6.8,4.4 H1.8 Z" fill="#e00"/></svg>
<div class="t " style="top:272.70px;font-size:7.1px;color:#1e1e1e;left:643.50px;">Anderson, Anthony</div>
<div class="t " style="top:272.70px;font-size:7.1px;color:#1e1e1e;left:772.80px;">10/12/1999</div>
<div class="t " style="top:272.70px;font-size:7.1px;color:#1e1e1e;left:843.30px;">SGTESTCLIENT</div>
<div class="t " style="top:272.70px;font-size:7.1px;color:#1e1e1e;left:939.60px;">UBH</div>
<div class="t " style="top:272.70px;font-size:7.1px;color:#1e1e1e;left:1010.80px;">11/15/2011</div>
<div class="t " style="top:272.70px;font-size:7.1px;color:#1e1e1e;left:1082.30px;">UBH/USBHPC</div>
<div class="t " style="top:272.70px;font-size:7.1px;color:#1e1e1e;left:1282.80px;">8/15/2016</div>
<div class="t " style="top:272.70px;font-size:7.1px;color:#1e1e1e;left:1360.80px;">2/15/2017</div>
<div class="t " style="top:272.70px;font-size:7.1px;color:#1e1e1e;left:1438.80px;">8</div>
<div class="a" style="left:628.00px;top:291.16px;width:880.00px;height:1.00px;background:#ebebeb;"></div>
<svg class="a" style="left:631.00px;top:282.45px" width="8" height="8" viewBox="0 0 8 8"><path d="M1.2,0.5 V7.5" stroke="#e00" stroke-width="1.2"/><path d="M1.8,0.8 H6.8 L5.6,2.6 L6.8,4.4 H1.8 Z" fill="#e00"/></svg>
<div class="t " style="top:284.11px;font-size:7.1px;color:#1e1e1e;left:643.50px;">Anderson, Pamela</div>
<div class="t " style="top:284.11px;font-size:7.1px;color:#1e1e1e;left:772.80px;">2/13/2007</div>
<div class="t " style="top:284.11px;font-size:7.1px;color:#1e1e1e;left:843.30px;">Zone 2</div>
<div class="t " style="top:284.11px;font-size:7.1px;color:#1e1e1e;left:939.60px;">UBH</div>
<div class="t " style="top:284.11px;font-size:7.1px;color:#1e1e1e;left:1010.80px;">6/20/2014</div>
<div class="t " style="top:284.11px;font-size:7.1px;color:#1e1e1e;left:1082.30px;">UBH/USBHPC</div>
<div class="t " style="top:284.11px;font-size:7.1px;color:#1e1e1e;left:1282.80px;">7/21/2016</div>
<div class="t " style="top:284.11px;font-size:7.1px;color:#1e1e1e;left:1360.80px;">12/20/2016</div>
<div class="t " style="top:284.11px;font-size:7.1px;color:#1e1e1e;left:1438.80px;">Pre-K</div>
<div class="a" style="left:628.00px;top:302.56px;width:880.00px;height:1.00px;background:#ebebeb;"></div>
<svg class="a" style="left:631.00px;top:293.86px" width="8" height="8" viewBox="0 0 8 8"><path d="M1.2,0.5 V7.5" stroke="#e00" stroke-width="1.2"/><path d="M1.8,0.8 H6.8 L5.6,2.6 L6.8,4.4 H1.8 Z" fill="#e00"/></svg>
<div class="t " style="top:295.52px;font-size:7.1px;color:#1e1e1e;left:643.50px;">Anderson, Sunny</div>
<div class="t " style="top:295.52px;font-size:7.1px;color:#1e1e1e;left:772.80px;">12/17/2004</div>
<div class="t " style="top:295.52px;font-size:7.1px;color:#1e1e1e;left:843.30px;">Zone 4</div>
<div class="t " style="top:295.52px;font-size:7.1px;color:#1e1e1e;left:939.60px;">NA-School Service...</div>
<div class="t " style="top:295.52px;font-size:7.1px;color:#1e1e1e;left:1010.80px;">8/2/2008</div>
<div class="t " style="top:295.52px;font-size:7.1px;color:#1e1e1e;left:1082.30px;">SD:  Glendale Unified School District</div>
<div class="t " style="top:295.52px;font-size:7.1px;color:#1e1e1e;left:1282.80px;">4/16/2016</div>
<div class="t " style="top:295.52px;font-size:7.1px;color:#1e1e1e;left:1360.80px;">4/14/2017</div>
<div class="t " style="top:295.52px;font-size:7.1px;color:#1e1e1e;left:1438.80px;">4</div>
<div class="a" style="left:628.00px;top:313.97px;width:880.00px;height:1.00px;background:#ebebeb;"></div>
<svg class="a" style="left:631.00px;top:305.26px" width="8" height="8" viewBox="0 0 8 8"><path d="M1.2,0.5 V7.5" stroke="#e00" stroke-width="1.2"/><path d="M1.8,0.8 H6.8 L5.6,2.6 L6.8,4.4 H1.8 Z" fill="#e00"/></svg>
<div class="t " style="top:306.93px;font-size:7.1px;color:#1e1e1e;left:643.50px;">Andres, Jose</div>
<div class="t " style="top:306.93px;font-size:7.1px;color:#1e1e1e;left:772.80px;">6/18/2003</div>
<div class="t " style="top:306.93px;font-size:7.1px;color:#1e1e1e;left:843.30px;">Zone 4</div>
<div class="t " style="top:306.93px;font-size:7.1px;color:#1e1e1e;left:939.60px;">NA-School Service...</div>
<div class="t " style="top:306.93px;font-size:7.1px;color:#1e1e1e;left:1010.80px;">2/15/2011</div>
<div class="t " style="top:306.93px;font-size:7.1px;color:#1e1e1e;left:1082.30px;">SD:  Glendale Unified School District</div>
<div class="t " style="top:306.93px;font-size:7.1px;color:#1e1e1e;left:1282.80px;">2/3/2016</div>
<div class="t " style="top:306.93px;font-size:7.1px;color:#1e1e1e;left:1360.80px;">1/20/2017</div>
<div class="t " style="top:306.93px;font-size:7.1px;color:#1e1e1e;left:1438.80px;">5</div>
<div class="a" style="left:628.00px;top:325.38px;width:880.00px;height:1.00px;background:#ebebeb;"></div>
<svg class="a" style="left:631.00px;top:316.67px" width="8" height="8" viewBox="0 0 8 8"><path d="M1.2,0.5 V7.5" stroke="#e00" stroke-width="1.2"/><path d="M1.8,0.8 H6.8 L5.6,2.6 L6.8,4.4 H1.8 Z" fill="#e00"/></svg>
<div class="t " style="top:318.34px;font-size:7.1px;color:#1e1e1e;left:643.50px;">Aniston, Jennifer</div>
<div class="t " style="top:318.34px;font-size:7.1px;color:#1e1e1e;left:772.80px;">7/18/2004</div>
<div class="t " style="top:318.34px;font-size:7.1px;color:#1e1e1e;left:843.30px;">Zone 4</div>
<div class="t " style="top:318.34px;font-size:7.1px;color:#1e1e1e;left:939.60px;">Cigna</div>
<div class="t " style="top:318.34px;font-size:7.1px;color:#1e1e1e;left:1010.80px;">5/31/2007</div>
<div class="t " style="top:318.34px;font-size:7.1px;color:#1e1e1e;left:1082.30px;">Cigna Behavioral Health</div>
<div class="t " style="top:318.34px;font-size:7.1px;color:#1e1e1e;left:1282.80px;">7/6/2016</div>
<div class="t " style="top:318.34px;font-size:7.1px;color:#1e1e1e;left:1360.80px;">1/7/2017</div>
<div class="t " style="top:318.34px;font-size:7.1px;color:#1e1e1e;left:1438.80px;">3</div>
<div class="a" style="left:628.00px;top:336.79px;width:880.00px;height:1.00px;background:#ebebeb;"></div>
<svg class="a" style="left:631.00px;top:328.08px" width="8" height="8" viewBox="0 0 8 8"><path d="M1.2,0.5 V7.5" stroke="#e00" stroke-width="1.2"/><path d="M1.8,0.8 H6.8 L5.6,2.6 L6.8,4.4 H1.8 Z" fill="#e00"/></svg>
<div class="t " style="top:329.74px;font-size:7.1px;color:#1e1e1e;left:643.50px;">Anthony, Marc</div>
<div class="t " style="top:329.74px;font-size:7.1px;color:#1e1e1e;left:772.80px;">12/13/2008</div>
<div class="t " style="top:329.74px;font-size:7.1px;color:#1e1e1e;left:843.30px;">Zone 3</div>
<div class="t " style="top:329.74px;font-size:7.1px;color:#1e1e1e;left:939.60px;">NA-605 Services O...</div>
<div class="t " style="top:329.74px;font-size:7.1px;color:#1e1e1e;left:1010.80px;">11/15/2011</div>
<div class="t " style="top:329.74px;font-size:7.1px;color:#1e1e1e;left:1082.30px;">Kal &amp; Penn Grant Foundation</div>
<div class="t " style="top:329.74px;font-size:7.1px;color:#1e1e1e;left:1282.80px;">8/8/2016</div>
<div class="t " style="top:329.74px;font-size:7.1px;color:#1e1e1e;left:1360.80px;">12/31/2016</div>
<div class="t " style="top:329.74px;font-size:7.1px;color:#1e1e1e;left:1438.80px;">K</div>
<div class="a" style="left:628.00px;top:348.20px;width:880.00px;height:1.00px;background:#ebebeb;"></div>
<div class="t " style="top:341.15px;font-size:7.1px;color:#1e1e1e;left:843.30px;">Zone 1</div>
<div class="t " style="top:341.15px;font-size:7.1px;color:#1e1e1e;left:939.60px;">NA-605 Services O...</div>
<div class="t " style="top:341.15px;font-size:7.1px;color:#1e1e1e;left:1010.80px;">11/15/2011</div>
<div class="t " style="top:341.15px;font-size:7.1px;color:#1e1e1e;left:1082.30px;">RC:  North LA Regional Center (Service Code 605)</div>
<div class="t " style="top:341.15px;font-size:7.1px;color:#1e1e1e;left:1282.80px;">8/1/2016</div>
<div class="t " style="top:341.15px;font-size:7.1px;color:#1e1e1e;left:1360.80px;">10/31/2016</div>
<div class="t " style="top:341.15px;font-size:7.1px;color:#1e1e1e;left:1438.80px;">4</div>
<div class="a" style="left:628.00px;top:359.60px;width:880.00px;height:1.00px;background:#ebebeb;"></div>
<div class="t " style="top:352.56px;font-size:7.1px;color:#1e1e1e;left:843.30px;">Zone 4</div>
<div class="t " style="top:352.56px;font-size:7.1px;color:#1e1e1e;left:939.60px;">NA-Single Payer D...</div>
<div class="t " style="top:352.56px;font-size:7.1px;color:#1e1e1e;left:1010.80px;">1/7/2009</div>
<div class="t " style="top:352.56px;font-size:7.1px;color:#1e1e1e;left:1082.30px;">SD:  Glendale Unified School District</div>
<div class="t " style="top:352.56px;font-size:7.1px;color:#1e1e1e;left:1282.80px;">10/12/2016</div>
<div class="t " style="top:352.56px;font-size:7.1px;color:#1e1e1e;left:1360.80px;">11/12/2016</div>
<div class="a" style="left:628.00px;top:371.01px;width:880.00px;height:1.00px;background:#ebebeb;"></div>
<div class="t " style="top:363.97px;font-size:7.1px;color:#1e1e1e;left:843.30px;">Zone 4</div>
<div class="t " style="top:363.97px;font-size:7.1px;color:#1e1e1e;left:939.60px;">NA-School Service...</div>
<div class="t " style="top:363.97px;font-size:7.1px;color:#1e1e1e;left:1010.80px;">11/26/2007</div>
<div class="t " style="top:363.97px;font-size:7.1px;color:#1e1e1e;left:1082.30px;">SD:  Glendale Unified School District</div>
<div class="t " style="top:363.97px;font-size:7.1px;color:#1e1e1e;left:1282.80px;">1/7/2016</div>
<div class="t " style="top:363.97px;font-size:7.1px;color:#1e1e1e;left:1360.80px;">1/6/2017</div>
<div class="t " style="top:363.97px;font-size:7.1px;color:#1e1e1e;left:1438.80px;">4</div>
<div class="a" style="left:628.00px;top:382.42px;width:880.00px;height:1.00px;background:#ebebeb;"></div>
<div class="t " style="top:375.38px;font-size:7.1px;color:#1e1e1e;left:843.30px;">Zone 5</div>
<div class="t " style="top:375.38px;font-size:7.1px;color:#1e1e1e;left:939.60px;">UBH</div>
<div class="t " style="top:375.38px;font-size:7.1px;color:#1e1e1e;left:1010.80px;">11/15/2011</div>
<div class="t " style="top:375.38px;font-size:7.1px;color:#1e1e1e;left:1082.30px;">SD:  Los Angeles Unified School District</div>
<div class="t " style="top:375.38px;font-size:7.1px;color:#1e1e1e;left:1282.80px;">4/12/2016</div>
<div class="t " style="top:375.38px;font-size:7.1px;color:#1e1e1e;left:1360.80px;">4/12/2017</div>
<div class="t " style="top:375.38px;font-size:7.1px;color:#1e1e1e;left:1438.80px;">Pre-K</div>
<div class="a" style="left:628.00px;top:393.83px;width:880.00px;height:1.00px;background:#ebebeb;"></div>
<div class="t " style="top:386.78px;font-size:7.1px;color:#1e1e1e;left:843.30px;">Zone 3</div>
<div class="t " style="top:386.78px;font-size:7.1px;color:#1e1e1e;left:939.60px;">NA-605 Services O...</div>
<div class="t " style="top:386.78px;font-size:7.1px;color:#1e1e1e;left:1010.80px;">11/21/2011</div>
<div class="t " style="top:386.78px;font-size:7.1px;color:#1e1e1e;left:1082.30px;">RC:  North LA Regional Center</div>
<div class="t " style="top:386.78px;font-size:7.1px;color:#1e1e1e;left:1282.80px;">6/1/2016</div>
<div class="t " style="top:386.78px;font-size:7.1px;color:#1e1e1e;left:1360.80px;">11/30/2016</div>
<div class="t " style="top:386.78px;font-size:7.1px;color:#1e1e1e;left:1438.80px;">1</div>
<div class="a" style="left:628.00px;top:405.24px;width:880.00px;height:1.00px;background:#ebebeb;"></div>
<div class="t " style="top:398.19px;font-size:7.1px;color:#1e1e1e;left:843.30px;">Zone 4</div>
<div class="t " style="top:398.19px;font-size:7.1px;color:#1e1e1e;left:939.60px;">NA-School Service...</div>
<div class="t " style="top:398.19px;font-size:7.1px;color:#1e1e1e;left:1010.80px;">9/20/2010</div>
<div class="t " style="top:398.19px;font-size:7.1px;color:#1e1e1e;left:1082.30px;">SD:  Glendale Unified School District</div>
<div class="t " style="top:398.19px;font-size:7.1px;color:#1e1e1e;left:1282.80px;">4/19/2016</div>
<div class="t " style="top:398.19px;font-size:7.1px;color:#1e1e1e;left:1360.80px;">4/19/2017</div>
<div class="t " style="top:398.19px;font-size:7.1px;color:#1e1e1e;left:1438.80px;">7</div>
<div class="a" style="left:628.00px;top:416.64px;width:880.00px;height:1.00px;background:#ebebeb;"></div>
<div class="t " style="top:409.60px;font-size:7.1px;color:#1e1e1e;left:843.30px;">Zone 3</div>
<div class="t " style="top:409.60px;font-size:7.1px;color:#1e1e1e;left:939.60px;">NA-605 Services O...</div>
<div class="t " style="top:409.60px;font-size:7.1px;color:#1e1e1e;left:1010.80px;">12/1/2011</div>
<div class="t " style="top:409.60px;font-size:7.1px;color:#1e1e1e;left:1082.30px;">RC:  North LA Regional Center (Service Code 605)</div>
<div class="a" style="left:628.00px;top:428.05px;width:880.00px;height:1.00px;background:#ebebeb;"></div>
<div class="t " style="top:421.01px;font-size:7.1px;color:#1e1e1e;left:843.30px;">Zone 3</div>
<div class="t " style="top:421.01px;font-size:7.1px;color:#1e1e1e;left:939.60px;">NA-605 Services O...</div>
<div class="t " style="top:421.01px;font-size:7.1px;color:#1e1e1e;left:1010.80px;">9/7/2011</div>
<div class="t " style="top:421.01px;font-size:7.1px;color:#1e1e1e;left:1082.30px;">RC:  North LA Regional Center (Service Code 605)</div>
<div class="a" style="left:628.00px;top:439.46px;width:880.00px;height:1.00px;background:#ebebeb;"></div>
<div class="t " style="top:432.42px;font-size:7.1px;color:#1e1e1e;left:843.30px;">Zone 1</div>
<div class="t " style="top:432.42px;font-size:7.1px;color:#1e1e1e;left:939.60px;">NA-605 Services O...</div>
<div class="t " style="top:432.42px;font-size:7.1px;color:#1e1e1e;left:1010.80px;">11/16/2011</div>
<div class="t " style="top:432.42px;font-size:7.1px;color:#1e1e1e;left:1082.30px;">RC:  North LA Regional Center (Service Code 605)</div>
<div class="a" style="left:628.00px;top:450.87px;width:880.00px;height:1.00px;background:#ebebeb;"></div>
<div class="t " style="top:443.82px;font-size:7.1px;color:#1e1e1e;left:843.30px;">Zone 1</div>
<div class="t " style="top:443.82px;font-size:7.1px;color:#1e1e1e;left:939.60px;">NA-605 Services O...</div>
<div class="t " style="top:443.82px;font-size:7.1px;color:#1e1e1e;left:1010.80px;">11/16/2011</div>
<div class="t " style="top:443.82px;font-size:7.1px;color:#1e1e1e;left:1082.30px;">RC:  North LA Regional Center (Service Code 605)</div>
<div class="a" style="left:628.00px;top:462.28px;width:880.00px;height:1.00px;background:#ebebeb;"></div>
<div class="t " style="top:455.23px;font-size:7.1px;color:#1e1e1e;left:843.30px;">Zone 2</div>
<div class="t " style="top:455.23px;font-size:7.1px;color:#1e1e1e;left:939.60px;">Aetna</div>
<div class="t " style="top:455.23px;font-size:7.1px;color:#1e1e1e;left:1010.80px;">6/29/2012</div>
<div class="t " style="top:455.23px;font-size:7.1px;color:#1e1e1e;left:1082.30px;">RC:  North LA Regional Center (Service Code 605)</div>
<div class="a" style="left:628.00px;top:473.68px;width:880.00px;height:1.00px;background:#ebebeb;"></div>
<div class="t " style="top:466.64px;font-size:7.1px;color:#1e1e1e;left:843.30px;">Zone 1</div>
<div class="t " style="top:466.64px;font-size:7.1px;color:#1e1e1e;left:939.60px;">NA-605 Services O...</div>
<div class="t " style="top:466.64px;font-size:7.1px;color:#1e1e1e;left:1010.80px;">12/28/2011</div>
<div class="t " style="top:466.64px;font-size:7.1px;color:#1e1e1e;left:1082.30px;">SD:  Los Angeles Unified School District</div>
<div class="a" style="left:628.00px;top:485.09px;width:880.00px;height:1.00px;background:#ebebeb;"></div>
<div class="t " style="top:478.05px;font-size:7.1px;color:#1e1e1e;left:843.30px;">Zone 4</div>
<div class="t " style="top:478.05px;font-size:7.1px;color:#1e1e1e;left:939.60px;">MediCal-LA CARE</div>
<div class="t " style="top:478.05px;font-size:7.1px;color:#1e1e1e;left:1010.80px;">5/1/2013</div>
<div class="t " style="top:478.05px;font-size:7.1px;color:#1e1e1e;left:1082.30px;">SD:  Los Angeles Unified School District</div>
<div class="a" style="left:628.00px;top:496.50px;width:880.00px;height:1.00px;background:#ebebeb;"></div>
<div class="t " style="top:489.46px;font-size:7.1px;color:#1e1e1e;left:843.30px;">Zone 5</div>
<div class="t " style="top:489.46px;font-size:7.1px;color:#1e1e1e;left:939.60px;">Kaiser</div>
<div class="t " style="top:489.46px;font-size:7.1px;color:#1e1e1e;left:1010.80px;">9/12/2012</div>
<div class="t " style="top:489.46px;font-size:7.1px;color:#1e1e1e;left:1082.30px;">Kaiser Permanente</div>
<div class="a" style="left:628.00px;top:507.91px;width:880.00px;height:1.00px;background:#ebebeb;"></div>
<div class="t " style="top:500.86px;font-size:7.1px;color:#1e1e1e;left:1010.80px;">2/6/2018</div>
<div class="t " style="top:500.86px;font-size:7.1px;color:#1e1e1e;left:1082.30px;">RC:  North LA Regional Center (Service Code 605)</div>
<div class="a" style="left:628.00px;top:519.32px;width:880.00px;height:1.00px;background:#ebebeb;"></div>
<div class="t " style="top:512.27px;font-size:7.1px;color:#1e1e1e;left:843.30px;">Zone 5</div>
<div class="t " style="top:512.27px;font-size:7.1px;color:#1e1e1e;left:939.60px;">Blue Shield / Mage...</div>
<div class="t " style="top:512.27px;font-size:7.1px;color:#1e1e1e;left:1010.80px;">4/1/2012</div>
<div class="t " style="top:512.27px;font-size:7.1px;color:#1e1e1e;left:1082.30px;">Magellan BS MHSA</div>
<div class="a" style="left:628.00px;top:530.72px;width:880.00px;height:1.00px;background:#ebebeb;"></div>
<div class="t " style="top:523.68px;font-size:7.1px;color:#1e1e1e;left:843.30px;">Zone 1</div>
<div class="t " style="top:523.68px;font-size:7.1px;color:#1e1e1e;left:939.60px;">Anthem / Blue Cross</div>
<div class="t " style="top:523.68px;font-size:7.1px;color:#1e1e1e;left:1010.80px;">4/13/2012</div>
<div class="t " style="top:523.68px;font-size:7.1px;color:#1e1e1e;left:1082.30px;">Anthem Blue Cross</div>
<div class="a" style="left:628.00px;top:542.13px;width:880.00px;height:1.00px;background:#ebebeb;"></div>
<div class="t " style="top:535.09px;font-size:7.1px;color:#1e1e1e;left:843.30px;">Zone 3</div>
<div class="t " style="top:535.09px;font-size:7.1px;color:#1e1e1e;left:939.60px;">NA-605 Services O...</div>
<div class="t " style="top:535.09px;font-size:7.1px;color:#1e1e1e;left:1010.80px;">6/21/2012</div>
<div class="t " style="top:535.09px;font-size:7.1px;color:#1e1e1e;left:1082.30px;">RC:  North LA Regional Center (Service Code 605)</div>
<div class="a" style="left:628.00px;top:553.54px;width:880.00px;height:1.00px;background:#ebebeb;"></div>
<div class="t " style="top:546.50px;font-size:7.1px;color:#1e1e1e;left:843.30px;">Zone 5</div>
<div class="t " style="top:546.50px;font-size:7.1px;color:#1e1e1e;left:939.60px;">MediCal</div>
<div class="t " style="top:546.50px;font-size:7.1px;color:#1e1e1e;left:1010.80px;">10/18/2012</div>
<div class="t " style="top:546.50px;font-size:7.1px;color:#1e1e1e;left:1082.30px;">RC:  Lanterman Regional Center</div>
<div class="a" style="left:628.00px;top:564.95px;width:880.00px;height:1.00px;background:#ebebeb;"></div>
<div class="t " style="top:557.90px;font-size:7.1px;color:#1e1e1e;left:843.30px;">Zone 5</div>
<div class="t " style="top:557.90px;font-size:7.1px;color:#1e1e1e;left:939.60px;">Aetna</div>
<div class="t " style="top:557.90px;font-size:7.1px;color:#1e1e1e;left:1010.80px;">8/1/2013</div>
<div class="t " style="top:557.90px;font-size:7.1px;color:#1e1e1e;left:1082.30px;">SD:  Los Angeles Unified School District</div>
<div class="a" style="left:628.00px;top:576.36px;width:880.00px;height:1.00px;background:#ebebeb;"></div>
<div class="t " style="top:569.31px;font-size:7.1px;color:#1e1e1e;left:843.30px;">Zone 5</div>
<div class="t " style="top:569.31px;font-size:7.1px;color:#1e1e1e;left:939.60px;">UBH</div>
<div class="t " style="top:569.31px;font-size:7.1px;color:#1e1e1e;left:1010.80px;">10/5/2012</div>
<div class="t " style="top:569.31px;font-size:7.1px;color:#1e1e1e;left:1082.30px;">UBH/USBHPC</div>
<div class="a" style="left:628.00px;top:587.76px;width:880.00px;height:1.00px;background:#ebebeb;"></div>
<div class="t " style="top:580.72px;font-size:7.1px;color:#1e1e1e;left:843.30px;">Zone 1</div>
<div class="t " style="top:580.72px;font-size:7.1px;color:#1e1e1e;left:939.60px;">Anthem / Blue Cross</div>
<div class="t " style="top:580.72px;font-size:7.1px;color:#1e1e1e;left:1010.80px;">1/1/2016</div>
<div class="t " style="top:580.72px;font-size:7.1px;color:#1e1e1e;left:1082.30px;">SD:  Los Angeles Unified School District</div>
<div class="a" style="left:628.00px;top:599.17px;width:880.00px;height:1.00px;background:#ebebeb;"></div>
<div class="t " style="top:592.13px;font-size:7.1px;color:#1e1e1e;left:843.30px;">Zone 2</div>
<div class="t " style="top:592.13px;font-size:7.1px;color:#1e1e1e;left:939.60px;">Anthem / Blue Cross</div>
<div class="t " style="top:592.13px;font-size:7.1px;color:#1e1e1e;left:1010.80px;">3/12/2013</div>
<div class="t " style="top:592.13px;font-size:7.1px;color:#1e1e1e;left:1082.30px;">Anthem Blue Cross</div>
<div class="a" style="left:628.00px;top:610.58px;width:880.00px;height:1.00px;background:#ebebeb;"></div>
<div class="t " style="top:603.54px;font-size:7.1px;color:#1e1e1e;left:843.30px;">Zone 4</div>
<div class="t " style="top:603.54px;font-size:7.1px;color:#1e1e1e;left:939.60px;">MediCal-LA CARE</div>
<div class="t " style="top:603.54px;font-size:7.1px;color:#1e1e1e;left:1010.80px;">4/26/2016</div>
<div class="t " style="top:603.54px;font-size:7.1px;color:#1e1e1e;left:1082.30px;">L.A. CARE Health Plan</div>
<div class="a" style="left:628.00px;top:621.99px;width:880.00px;height:1.00px;background:#ebebeb;"></div>
<div class="t " style="top:614.94px;font-size:7.1px;color:#1e1e1e;left:843.30px;">Zone 4</div>
<div class="t " style="top:614.94px;font-size:7.1px;color:#1e1e1e;left:939.60px;">MediCal-LA CARE</div>
<div class="t " style="top:614.94px;font-size:7.1px;color:#1e1e1e;left:1010.80px;">4/26/2016</div>
<div class="t " style="top:614.94px;font-size:7.1px;color:#1e1e1e;left:1082.30px;">L.A. CARE Health Plan</div>
<div class="a" style="left:628.00px;top:633.40px;width:880.00px;height:1.00px;background:#ebebeb;"></div>
<div class="t " style="top:626.35px;font-size:7.1px;color:#1e1e1e;left:843.30px;">Zone 3</div>
<div class="t " style="top:626.35px;font-size:7.1px;color:#1e1e1e;left:939.60px;">NA-School Service...</div>
<div class="t " style="top:626.35px;font-size:7.1px;color:#1e1e1e;left:1010.80px;">6/26/2013</div>
<div class="t " style="top:626.35px;font-size:7.1px;color:#1e1e1e;left:1082.30px;">RC:  North LA Regional Center (Service Code 605)</div>
<div class="a" style="left:628.00px;top:644.80px;width:880.00px;height:1.00px;background:#ebebeb;"></div>
<div class="t " style="top:637.76px;font-size:7.1px;color:#1e1e1e;left:843.30px;">Zone 1</div>
<div class="t " style="top:637.76px;font-size:7.1px;color:#1e1e1e;left:939.60px;">MediCal</div>
<div class="t " style="top:637.76px;font-size:7.1px;color:#1e1e1e;left:1010.80px;">8/6/2013</div>
<div class="t " style="top:637.76px;font-size:7.1px;color:#1e1e1e;left:1082.30px;">RC:  North LA Regional Center</div>
<div class="a" style="left:628.00px;top:656.21px;width:880.00px;height:1.00px;background:#ebebeb;"></div>
<div class="t " style="top:649.17px;font-size:7.1px;color:#1e1e1e;left:843.30px;">Zone 4</div>
<div class="t " style="top:649.17px;font-size:7.1px;color:#1e1e1e;left:939.60px;">Blue Shield LLM...</div>
<div class="t " style="top:649.17px;font-size:7.1px;color:#1e1e1e;left:1010.80px;">9/9/2013</div>
<div class="t " style="top:649.17px;font-size:7.1px;color:#1e1e1e;left:1082.30px;">Magellan BS MHSA</div>
</div>
<div class="a" style="left:640.20px;top:211.80px;width:1.00px;height:438.20px;background:#ececec;"></div>
<div class="a" style="left:769.50px;top:211.80px;width:1.00px;height:438.20px;background:#ececec;"></div>
<div class="a" style="left:840.00px;top:211.80px;width:1.00px;height:438.20px;background:#ececec;"></div>
<div class="a" style="left:936.30px;top:211.80px;width:1.00px;height:438.20px;background:#ececec;"></div>
<div class="a" style="left:1007.50px;top:211.80px;width:1.00px;height:438.20px;background:#ececec;"></div>
<div class="a" style="left:1079.00px;top:211.80px;width:1.00px;height:438.20px;background:#ececec;"></div>
<div class="a" style="left:1279.50px;top:211.80px;width:1.00px;height:438.20px;background:#ececec;"></div>
<div class="a" style="left:1357.50px;top:211.80px;width:1.00px;height:438.20px;background:#ececec;"></div>
<div class="a" style="left:1435.50px;top:211.80px;width:1.00px;height:438.20px;background:#ececec;"></div>
<div class="a" style="left:1508.00px;top:212.00px;width:9.00px;height:438.00px;background:#e8e8e8;"></div>
<div class="a" style="left:1509.00px;top:222.00px;width:7.00px;height:200.00px;background:#c8c8c8;"></div>
<svg class="a" style="left:1508.00px;top:213.00px" width="9" height="7" viewBox="0 0 9 7"><path d="M2,5 L4.5,2.5 L7,5" stroke="#555" fill="none" stroke-width="0.9"/></svg>
<div class="a" style="left:617.00px;top:650.00px;width:900.00px;height:18.00px;background:#fff;"></div>
<div class="a" style="left:617.00px;top:650.00px;width:900.00px;height:1.00px;background:#d0d0d0;"></div>
<svg class="a" style="left:836.00px;top:654.00px" width="9" height="10" viewBox="0 0 9 10"><path d="M1,1 V9" stroke="#333" stroke-width="1"/><path d="M1.5,1 H7 L6,3.5 L7,6 H1.5 Z" fill="#e8e020" stroke="#555" stroke-width="0.4"/></svg>
<div class="a" style="left:844.60px;top:653.50px;width:72.40px;height:12.70px;background:#fff;border:1px solid #c8c8c8;"></div>
<div class="t " style="top:657.36px;font-size:6.6px;color:#444;left:846.60px;">Cont. Due &lt; 30 days</div>
<div class="a" style="left:918.00px;top:653.50px;width:23.50px;height:12.70px;background:#fff;border:1px solid #c8c8c8;"></div>
<div class="t " style="top:657.36px;font-size:6.6px;color:#444;left:929.75px;transform:translateX(-50%);">0</div>
<div class="a" style="left:946.00px;top:653.50px;width:12.50px;height:12.70px;background:#fff;border:1px solid #c8c8c8;"></div>
<div class="a" style="left:959.00px;top:653.50px;width:34.00px;height:12.70px;background:#fff;border:1px solid #c8c8c8;"></div>
<div class="t " style="top:657.36px;font-size:6.6px;color:#444;left:961.00px;">Stay Put</div>
<div class="a" style="left:994.00px;top:653.50px;width:21.00px;height:12.70px;background:#fff;border:1px solid #c8c8c8;"></div>
<div class="t " style="top:657.36px;font-size:6.6px;color:#444;left:1004.50px;transform:translateX(-50%);">1</div>
<svg class="a" style="left:948.00px;top:655.00px" width="10" height="10" viewBox="0 0 10 10"><path d="M2,1 V9" stroke="#2a6ab8" stroke-width="1.2"/><path d="M2.5,1 H8 L7,3.5 L8,6 H2.5 Z" fill="#2a6ab8"/></svg>
<div class="a" style="left:477.00px;top:668.00px;width:1042.00px;height:14.00px;background:#f0f0f0;"></div>
<div class="a" style="left:477.00px;top:669.50px;width:1042.00px;height:0;border-top:1px dotted #d8d8d8"></div>
<div class="a" style="left:477.00px;top:147.00px;width:1.00px;height:535.00px;background:#641e91;"></div>
<div class="a" style="left:1519.00px;top:147.00px;width:1.00px;height:535.00px;background:#641e91;"></div>
<div class="a" style="left:477.00px;top:681.00px;width:1043.00px;height:1.00px;background:#641e91;"></div>
<div class="a" style="left:251.00px;top:338.00px;width:585.00px;height:410.00px;background:#f0f0f0;border:1px solid #8a9ac0;"></div>
<div class="a" style="left:252.00px;top:339.00px;width:583.50px;height:29.00px;background:#641e91;"></div>
<svg class="a" style="left:256.00px;top:344.00px" width="9" height="9" viewBox="0 0 9 9"><circle cx="4.5" cy="4.5" r="4.3" fill="#3aa0da"/><circle cx="4.5" cy="3.5" r="1.3" fill="#fff"/><path d="M2.3,7 Q4.5,4.3 6.7,7 Z" fill="#fff"/></svg>
<div class="t " style="top:345.28px;font-size:5.8px;color:#fff;left:543.30px;transform:translateX(-50%);">Client - Alec Baldwin</div>
<div class="a" style="left:766.00px;top:348.00px;width:6.00px;height:1.00px;background:#e4dcec;"></div>
<div class="a" style="left:792.30px;top:344.80px;width:6.50px;height:6.50px;border:1px solid #e4dcec;"></div>
<svg class="a" style="left:818.90px;top:344.90px" width="6.2" height="6.2" viewBox="0 0 6.2 6.2"><path d="M0,0 L6.2,6.2 M6.2,0 L0,6.2" stroke="#e4dcec" stroke-width="0.9"/></svg>
<div class="a" style="left:255.50px;top:356.50px;width:37.50px;height:11.50px;background:#f0f0f0;"></div>
<div class="t " style="top:360.22px;font-size:5.7px;color:#555;left:274.30px;transform:translateX(-50%);">Personal</div>
<div class="t " style="top:360.22px;font-size:5.7px;color:#fff;left:314.50px;transform:translateX(-50%);">Enrollments</div>
<div class="t " style="top:360.22px;font-size:5.7px;color:#fff;left:356.00px;transform:translateX(-50%);">Contracts</div>
<div class="t " style="top:360.22px;font-size:5.7px;color:#fff;left:394.00px;transform:translateX(-50%);">Services</div>
<div class="t " style="top:360.22px;font-size:5.7px;color:#fff;left:433.50px;transform:translateX(-50%);">DocCenter</div>
<div class="a" style="left:361.50px;top:371.00px;width:0;height:45.00px;border-left:1px dotted #c4c4c4"></div>
<div class="a" style="left:410.00px;top:371.00px;width:0;height:45.00px;border-left:1px dotted #c4c4c4"></div>
<div class="a" style="left:469.00px;top:371.00px;width:0;height:45.00px;border-left:1px dotted #c4c4c4"></div>
<div class="a" style="left:547.50px;top:371.00px;width:0;height:45.00px;border-left:1px dotted #c4c4c4"></div>
<svg class="a" style="left:261.00px;top:372.20px" width="15" height="15" viewBox="0 -1 15 15"><path d="M1.5,0.8 H11.5 L13.2,2.5 V13.2 H1.5 Z" fill="#fff" stroke="#7a7aa0" stroke-width="1.5" stroke-linejoin="round"/><rect x="4.5" y="0.8" width="6" height="4" fill="#7a7aa0"/><rect x="7.8" y="1.5" width="1.6" height="2.6" fill="#fff"/><rect x="3.2" y="7" width="8.8" height="5.5" fill="#fff" stroke="#7a7aa0" stroke-width="0.6"/></svg>
<div class="t " style="top:392.92px;font-size:5.7px;color:#444;left:267.50px;transform:translateX(-50%);">Save</div>
<svg class="a" style="left:287.50px;top:372.20px" width="15" height="15" viewBox="0 -1 15 15"><path d="M1.5,0.8 H12 V13.2 H1.5 Z" fill="#fff" stroke="#5a3a8a" stroke-width="1.5"/><rect x="3.2" y="2" width="7" height="3.5" fill="#f4f4f4" stroke="#bbb" stroke-width="0.5"/><rect x="3.5" y="9" width="7" height="4" fill="#fff"/><rect x="5" y="10" width="1.6" height="3" fill="#5a3a8a"/><rect x="9.5" y="-1.5" width="6" height="5.5" fill="#ea6e5e"/><path d="M11,-0.3 L14,2.8 M14,-0.3 L11,2.8" stroke="#fff" stroke-width="0.7"/></svg>
<div class="t " style="top:392.92px;font-size:5.7px;color:#444;left:293.50px;transform:translateX(-50%);">Save &amp;</div>
<div class="t " style="top:400.12px;font-size:5.7px;color:#444;left:293.50px;transform:translateX(-50%);">Close</div>
<svg class="a" style="left:314.00px;top:372.70px" width="13" height="13" viewBox="0 0 13 13"><path d="M10.5,4 A4.5,4.5 0 1 0 11,7.5" fill="none" stroke="#8a8aa8" stroke-width="2"/><path d="M8,6 L12,7 L12.5,3 Z" fill="#8a8aa8"/></svg>
<div class="t " style="top:392.92px;font-size:5.7px;color:#444;left:320.00px;transform:translateX(-50%);">Refresh</div>
<svg class="a" style="left:338.50px;top:371.20px" width="16" height="16" viewBox="0 0 16 16"><rect x="0" y="0" width="16" height="16" fill="#ea6e5e"/><path d="M3,3 L13,13 M13,3 L3,13" stroke="#fff" stroke-width="1.6"/></svg>
<div class="t " style="top:392.92px;font-size:5.7px;color:#444;left:346.00px;transform:translateX(-50%);">Cancel</div>
<div class="t " style="top:411.52px;font-size:5.7px;color:#444;left:307.50px;transform:translateX(-50%);">Student</div>
<svg class="a" style="left:378.00px;top:371.50px" width="14" height="15" viewBox="0 0 14 15"><circle cx="5" cy="10" r="2.6" fill="none" stroke="#2a6ab8" stroke-width="2.34"/><circle cx="5" cy="10" r="4.03" fill="none" stroke="#2a6ab8" stroke-width="1.30" stroke-dasharray="1.95 2.21"/><circle cx="10.5" cy="3.8" r="1.7" fill="none" stroke="#2a6ab8" stroke-width="1.53"/><circle cx="10.5" cy="3.8" r="2.63" fill="none" stroke="#2a6ab8" stroke-width="0.85" stroke-dasharray="1.27 1.44"/></svg>
<div class="t " style="top:392.92px;font-size:5.7px;color:#444;left:385.50px;transform:translateX(-50%);">Clinical</div>
<div class="t " style="top:411.52px;font-size:5.7px;color:#444;left:386.00px;transform:translateX(-50%);">Integrations</div>
<svg class="a" style="left:419.50px;top:373.20px" width="12" height="12" viewBox="0 0 12 12"><path d="M6.0,0 V12 M0,6.0 H12" stroke="#3d73b6" stroke-width="2"/></svg>
<div class="t " style="top:392.92px;font-size:5.7px;color:#444;left:425.00px;transform:translateX(-50%);">Add</div>
<svg class="a" style="left:446.00px;top:373.20px" width="12" height="12" viewBox="0 0 12 12"><path d="M1,1 L11,11 M11,1 L1,11" stroke="#e8705f" stroke-width="2"/></svg>
<div class="t " style="top:392.92px;font-size:5.7px;color:#444;left:452.00px;transform:translateX(-50%);">Remove</div>
<div class="t " style="top:411.52px;font-size:5.7px;color:#444;left:439.50px;transform:translateX(-50%);">Contacts</div>
<svg class="a" style="left:483.00px;top:373.20px" width="12" height="12" viewBox="0 0 12 12"><path d="M6.0,0 V12 M0,6.0 H12" stroke="#3d73b6" stroke-width="2"/></svg>
<div class="t " style="top:392.92px;font-size:5.7px;color:#444;left:488.50px;transform:translateX(-50%);">Add Photo</div>
<svg class="a" style="left:517.00px;top:372.00px" width="18" height="17" viewBox="0 0 18 17"><path d="M3,11 L11,2 L16,6 L8,15 Z" fill="#ea6e5e"/><path d="M3,11 L8,15 L6.5,16.5 L1.5,12.5 Z" fill="#2a6ab8"/></svg>
<div class="t " style="top:392.92px;font-size:5.7px;color:#444;left:525.50px;transform:translateX(-50%);">Clear Photo</div>
<div class="t " style="top:411.52px;font-size:5.7px;color:#444;left:508.50px;transform:translateX(-50%);">Personal</div>
<svg class="a" style="left:822.00px;top:408.00px" width="9" height="7" viewBox="0 0 9 7"><path d="M1,5.5 L4.5,2 L8,5.5" stroke="#888" fill="none" stroke-width="1"/><path d="M2,6.5 H7" stroke="#aaa" stroke-width="0.8"/></svg>
<div class="a" style="left:252.00px;top:419.00px;width:582.00px;height:1.00px;background:#d4d4d4;"></div>
<div class="a" style="left:252.00px;top:420.00px;width:582.00px;height:1.00px;background:#fafafa;"></div>
<div class="a" style="left:257.00px;top:425.00px;width:573.00px;height:62.00px;border:1px dotted #d0d0d0;"></div>
<div class="a" style="left:259.00px;top:421.00px;width:26.00px;height:8.00px;background:#f0f0f0;"></div>
<div class="t " style="top:422.98px;font-size:5.8px;color:#333;left:261.00px;">Personal</div>
<div class="a" style="left:259.00px;top:429.40px;width:54.00px;height:53.30px;background:#a9adbc;border:1px solid #9a9eac;"></div>
<div class="a" style="left:320.50px;top:429.50px;width:38.50px;height:11.00px;background:#ececec;border:1px dotted #c8d0e0;"></div>
<div class="t " style="top:432.68px;font-size:5.8px;color:#555;left:322.50px;">First Name</div>
<div class="a" style="left:359.00px;top:429.50px;width:74.00px;height:11.00px;background:#fff;border:1px solid #7a9ad0;"></div>
<div class="a" style="left:361.50px;top:431.20px;width:11.00px;height:7.60px;background:#3a78c8;"></div>
<div class="t " style="top:432.68px;font-size:5.8px;color:#fff;left:362.00px;">Alec</div>
<div class="a" style="left:320.50px;top:444.00px;width:38.50px;height:11.00px;background:#ececec;border:1px dotted #c8d0e0;"></div>
<div class="t " style="top:447.18px;font-size:5.8px;color:#555;left:322.50px;">Gender</div>
<div class="a" style="left:359.00px;top:444.00px;width:74.00px;height:11.00px;background:#e6e6e6;border:1px solid #a8a8a8;"></div>
<div class="t " style="top:447.18px;font-size:5.8px;color:#222;left:361.50px;">Male</div>
<svg class="a" style="left:424.00px;top:446.50px" width="7" height="6" viewBox="0 0 7 6"><path d="M1.5,1.8 L3.5,3.8 L5.5,1.8" stroke="#555" fill="none" stroke-width="0.9"/></svg>
<div class="a" style="left:320.50px;top:458.30px;width:38.50px;height:11.00px;background:#ececec;border:1px dotted #c8d0e0;"></div>
<div class="t " style="top:461.48px;font-size:5.8px;color:#555;left:322.50px;">Ethnicity</div>
<div class="a" style="left:359.00px;top:458.30px;width:74.00px;height:11.00px;background:#e6e6e6;border:1px solid #a8a8a8;"></div>
<svg class="a" style="left:424.00px;top:460.80px" width="7" height="6" viewBox="0 0 7 6"><path d="M1.5,1.8 L3.5,3.8 L5.5,1.8" stroke="#555" fill="none" stroke-width="0.9"/></svg>
<div class="a" style="left:320.50px;top:472.80px;width:38.50px;height:11.00px;background:#ececec;border:1px dotted #c8d0e0;"></div>
<div class="t " style="top:475.98px;font-size:5.8px;color:#555;left:322.50px;">Type</div>
<div class="a" style="left:359.00px;top:472.80px;width:74.00px;height:11.00px;background:#e6e6e6;border:1px solid #a8a8a8;"></div>
<div class="t " style="top:475.98px;font-size:5.8px;color:#222;left:361.50px;">Zone 3</div>
<svg class="a" style="left:424.00px;top:475.30px" width="7" height="6" viewBox="0 0 7 6"><path d="M1.5,1.8 L3.5,3.8 L5.5,1.8" stroke="#555" fill="none" stroke-width="0.9"/></svg>
<div class="a" style="left:439.50px;top:429.50px;width:38.50px;height:11.00px;background:#ececec;border:1px dotted #c8d0e0;"></div>
<div class="t " style="top:432.68px;font-size:5.8px;color:#555;left:441.50px;">Middle</div>
<div class="a" style="left:478.50px;top:429.50px;width:77.00px;height:11.00px;background:#fff;border:1px solid #a8a8a8;"></div>
<div class="a" style="left:439.50px;top:444.00px;width:38.50px;height:11.00px;background:#ececec;border:1px dotted #c8d0e0;"></div>
<div class="t " style="top:447.18px;font-size:5.8px;color:#555;left:441.50px;">DOB  [ Age ]</div>
<div class="a" style="left:478.50px;top:444.00px;width:46.00px;height:11.00px;background:#fff;border:1px solid #a8a8a8;"></div>
<div class="t " style="top:447.18px;font-size:5.8px;color:#222;left:481.00px;">8/16/2007</div>
<svg class="a" style="left:515.50px;top:446.50px" width="7" height="6" viewBox="0 0 7 6"><path d="M1.5,1.8 L3.5,3.8 L5.5,1.8" stroke="#555" fill="none" stroke-width="0.9"/></svg>
<div class="a" style="left:528.00px;top:444.00px;width:27.50px;height:11.00px;background:#fff;border:1px solid #a8a8a8;"></div>
<div class="t " style="top:447.18px;font-size:5.8px;color:#222;left:530.50px;">11 yr. 7 m</div>
<div class="a" style="left:439.50px;top:458.30px;width:38.50px;height:11.00px;background:#ececec;border:1px dotted #c8d0e0;"></div>
<div class="t " style="top:461.48px;font-size:5.8px;color:#555;left:441.50px;">Frmly Lang.</div>
<div class="a" style="left:478.50px;top:458.30px;width:77.00px;height:11.00px;background:#e6e6e6;border:1px solid #a8a8a8;"></div>
<svg class="a" style="left:546.50px;top:460.80px" width="7" height="6" viewBox="0 0 7 6"><path d="M1.5,1.8 L3.5,3.8 L5.5,1.8" stroke="#555" fill="none" stroke-width="0.9"/></svg>
<div class="a" style="left:439.50px;top:472.80px;width:38.50px;height:11.00px;background:#ececec;border:1px dotted #c8d0e0;"></div>
<div class="t " style="top:475.98px;font-size:5.8px;color:#555;left:441.50px;">Status</div>
<div class="a" style="left:478.50px;top:472.80px;width:77.00px;height:11.00px;background:#e6e6e6;border:1px solid #a8a8a8;"></div>
<div class="t " style="top:475.98px;font-size:5.8px;color:#222;left:481.00px;">NA-605 Services Only</div>
<svg class="a" style="left:546.50px;top:475.30px" width="7" height="6" viewBox="0 0 7 6"><path d="M1.5,1.8 L3.5,3.8 L5.5,1.8" stroke="#555" fill="none" stroke-width="0.9"/></svg>
<div class="a" style="left:561.00px;top:429.50px;width:39.00px;height:11.00px;background:#ececec;border:1px dotted #c8d0e0;"></div>
<div class="t " style="top:432.68px;font-size:5.8px;color:#555;left:563.00px;">Last Name</div>
<div class="a" style="left:600.00px;top:429.50px;width:229.00px;height:11.00px;background:#fff;border:1px solid #a8a8a8;"></div>
<div class="t " style="top:432.68px;font-size:5.8px;color:#222;left:602.50px;">Baldwin</div>
<div class="a" style="left:561.00px;top:444.00px;width:39.00px;height:11.00px;background:#ececec;border:1px dotted #c8d0e0;"></div>
<div class="t " style="top:447.18px;font-size:5.8px;color:#555;left:563.00px;">Tracking ID</div>
<div class="a" style="left:600.00px;top:444.00px;width:229.00px;height:11.00px;background:#fff;border:1px solid #a8a8a8;"></div>
<div class="t " style="top:447.18px;font-size:5.8px;color:#222;left:602.50px;">Simpson-Ziggy-20070331</div>
<svg class="a" style="left:820.00px;top:446.50px" width="7" height="6" viewBox="0 0 7 6"><path d="M1.5,1.8 L3.5,3.8 L5.5,1.8" stroke="#555" fill="none" stroke-width="0.9"/></svg>
<div class="a" style="left:817.00px;top:444.00px;width:1.00px;height:11.00px;background:#a8a8a8;"></div>
<div class="a" style="left:561.00px;top:458.30px;width:39.00px;height:11.00px;background:#ececec;border:1px dotted #c8d0e0;"></div>
<div class="t " style="top:461.48px;font-size:5.8px;color:#555;left:563.00px;">Client Lang.</div>
<div class="a" style="left:600.00px;top:458.30px;width:229.00px;height:11.00px;background:#e6e6e6;border:1px solid #a8a8a8;"></div>
<svg class="a" style="left:820.00px;top:460.80px" width="7" height="6" viewBox="0 0 7 6"><path d="M1.5,1.8 L3.5,3.8 L5.5,1.8" stroke="#555" fill="none" stroke-width="0.9"/></svg>
<div class="a" style="left:561.00px;top:472.80px;width:39.00px;height:11.00px;background:#ececec;border:1px dotted #c8d0e0;"></div>
<div class="t " style="top:475.98px;font-size:5.8px;color:#555;left:563.00px;">Schl Grade</div>
<div class="a" style="left:600.00px;top:472.80px;width:229.00px;height:11.00px;background:#e6e6e6;border:1px solid #a8a8a8;"></div>
<div class="t " style="top:475.98px;font-size:5.8px;color:#222;left:602.50px;">1</div>
<svg class="a" style="left:820.00px;top:475.30px" width="7" height="6" viewBox="0 0 7 6"><path d="M1.5,1.8 L3.5,3.8 L5.5,1.8" stroke="#555" fill="none" stroke-width="0.9"/></svg>
<div class="t " style="top:488.68px;font-size:5.8px;color:#333;left:260.00px;">Contacts</div>
<div class="a" style="left:257.40px;top:496.30px;width:573.00px;height:91.00px;background:#fff;border:1px solid #a8a8a8;"></div>
<div class="a" style="left:351.00px;top:497.00px;width:0;height:89.00px;border-left:1px dotted #e0e0e0"></div>
<div class="a" style="left:400.00px;top:497.00px;width:0;height:89.00px;border-left:1px dotted #e0e0e0"></div>
<div class="a" style="left:470.50px;top:497.00px;width:0;height:89.00px;border-left:1px dotted #e0e0e0"></div>
<div class="a" style="left:517.50px;top:497.00px;width:0;height:89.00px;border-left:1px dotted #e0e0e0"></div>
<div class="a" style="left:578.50px;top:497.00px;width:0;height:89.00px;border-left:1px dotted #e0e0e0"></div>
<div class="a" style="left:642.00px;top:497.00px;width:0;height:89.00px;border-left:1px dotted #e0e0e0"></div>
<div class="a" style="left:258.00px;top:508.50px;width:384.00px;height:0;border-top:1px dotted #e4e4e4"></div>
<div class="a" style="left:258.00px;top:520.00px;width:384.00px;height:0;border-top:1px dotted #e4e4e4"></div>
<div class="a" style="left:258.00px;top:529.50px;width:384.00px;height:0;border-top:1px dotted #e4e4e4"></div>
<div class="a" style="left:258.00px;top:539.00px;width:384.00px;height:0;border-top:1px dotted #e4e4e4"></div>
<div class="a" style="left:258.00px;top:548.50px;width:384.00px;height:0;border-top:1px dotted #e4e4e4"></div>
<div class="a" style="left:258.00px;top:558.00px;width:384.00px;height:0;border-top:1px dotted #e4e4e4"></div>
<div class="a" style="left:258.00px;top:567.50px;width:384.00px;height:0;border-top:1px dotted #e4e4e4"></div>
<div class="a" style="left:258.00px;top:577.00px;width:384.00px;height:0;border-top:1px dotted #e4e4e4"></div>
<div class="t " style="top:501.26px;font-size:5.6px;color:#333;left:262.00px;">Name</div>
<div class="t " style="top:501.26px;font-size:5.6px;color:#333;left:375.50px;transform:translateX(-50%);">Main Phone</div>
<div class="t " style="top:501.26px;font-size:5.6px;color:#333;left:435.25px;transform:translateX(-50%);">City</div>
<div class="t " style="top:501.26px;font-size:5.6px;color:#333;left:494.00px;transform:translateX(-50%);">Legal Guardian</div>
<div class="t " style="top:501.26px;font-size:5.6px;color:#333;left:548.00px;transform:translateX(-50%);">Type</div>
<div class="t " style="top:501.26px;font-size:5.6px;color:#333;left:610.25px;transform:translateX(-50%);">Relation</div>
<div class="a" style="left:258.00px;top:509.50px;width:384.00px;height:10.50px;background:#d6d4d0;"></div>
<div class="t " style="top:512.76px;font-size:5.6px;color:#111;font-weight:bold;left:262.00px;">Rock, Chris</div>
<div class="t " style="top:512.76px;font-size:5.6px;color:#111;font-weight:bold;left:375.50px;transform:translateX(-50%);">(446)580-1...</div>
<div class="t " style="top:512.76px;font-size:5.6px;color:#111;font-weight:bold;left:435.25px;transform:translateX(-50%);">HORSE CREEK</div>
<div class="t " style="top:512.76px;font-size:5.6px;color:#111;font-weight:bold;left:494.00px;transform:translateX(-50%);">Yes</div>
<div class="t " style="top:512.76px;font-size:5.6px;color:#111;font-weight:bold;left:548.00px;transform:translateX(-50%);">[Parent/Guardi...</div>
<div class="t " style="top:512.76px;font-size:5.6px;color:#111;font-weight:bold;left:610.25px;transform:translateX(-50%);">Parents</div>
<div class="t " style="top:522.26px;font-size:5.6px;color:#111;left:262.00px;">Zeta-Jones, Catherine</div>
<div class="t " style="top:522.26px;font-size:5.6px;color:#111;left:375.50px;transform:translateX(-50%);">(446)577-1777</div>
<div class="t " style="top:522.26px;font-size:5.6px;color:#111;left:435.25px;transform:translateX(-50%);">POND</div>
<div class="t " style="top:522.26px;font-size:5.6px;color:#111;left:548.00px;transform:translateX(-50%);">Internal</div>
<div class="t " style="top:522.26px;font-size:5.6px;color:#111;left:610.25px;transform:translateX(-50%);">Supervisor , Co Sup</div>
<div class="t " style="top:531.76px;font-size:5.6px;color:#111;left:262.00px;">Le, Jessica</div>
<div class="t " style="top:531.76px;font-size:5.6px;color:#111;left:375.50px;transform:translateX(-50%);">(446)526-1267</div>
<div class="t " style="top:531.76px;font-size:5.6px;color:#111;left:435.25px;transform:translateX(-50%);">PALO CEDRO</div>
<div class="t " style="top:531.76px;font-size:5.6px;color:#111;left:548.00px;transform:translateX(-50%);">External</div>
<div class="t " style="top:531.76px;font-size:5.6px;color:#111;left:610.25px;transform:translateX(-50%);">Teacher</div>
<div class="a" style="left:257.00px;top:591.00px;width:393.00px;height:130.00px;border:1px dotted #d0d0d0;"></div>
<div class="a" style="left:260.00px;top:587.50px;width:56.00px;height:7.00px;background:#f0f0f0;"></div>
<div class="t " style="top:588.88px;font-size:5.8px;color:#333;left:262.00px;">Address Information</div>
<div class="a" style="left:266.00px;top:597.80px;width:44.00px;height:11.00px;background:#ececec;border:1px dotted #c8d0e0;"></div>
<div class="t " style="top:600.98px;font-size:5.8px;color:#555;left:268.00px;">First Name</div>
<div class="a" style="left:311.00px;top:597.80px;width:84.00px;height:11.00px;background:#fff;border:1px solid #a8a8a8;"></div>
<div class="t " style="top:600.98px;font-size:5.8px;color:#222;left:313.50px;">Chris</div>
<div class="a" style="left:266.00px;top:611.00px;width:44.00px;height:11.00px;background:#ececec;border:1px dotted #c8d0e0;"></div>
<div class="t " style="top:614.18px;font-size:5.8px;color:#555;left:268.00px;">Address</div>
<div class="a" style="left:311.00px;top:611.00px;width:84.00px;height:11.00px;background:#fff;border:1px solid #a8a8a8;"></div>
<div class="t " style="top:614.18px;font-size:5.8px;color:#222;left:313.50px;">30438 WALKER RD.</div>
<div class="a" style="left:311.00px;top:624.20px;width:84.00px;height:11.00px;background:#fff;border:1px solid #a8a8a8;"></div>
<div class="a" style="left:311.00px;top:637.40px;width:84.00px;height:11.00px;background:#fff;border:1px solid #a8a8a8;"></div>
<div class="a" style="left:266.00px;top:652.30px;width:44.00px;height:11.00px;background:#ececec;border:1px dotted #c8d0e0;"></div>
<div class="t " style="top:655.48px;font-size:5.8px;color:#555;left:268.00px;">Email</div>
<div class="a" style="left:311.00px;top:652.30px;width:84.00px;height:11.00px;background:#fff;border:1px solid #a8a8a8;"></div>
<div class="t " style="top:655.48px;font-size:5.8px;color:#222;left:313.50px;">Chris.Rock@cmguardian.com</div>
<svg class="a" style="left:397.00px;top:611.50px" width="10" height="10" viewBox="0 0 10 10"><rect x="0.5" y="0.5" width="9" height="9" fill="#e0e0e0" stroke="#bbb" stroke-width="0.6"/><circle cx="5" cy="5" r="2.8" fill="#5a7ab0"/></svg>
<svg class="a" style="left:397.00px;top:652.80px" width="10" height="10" viewBox="0 0 10 10"><rect x="0.5" y="0.5" width="9" height="9" fill="#e0e0e0" stroke="#bbb" stroke-width="0.6"/><circle cx="5" cy="5" r="2.8" fill="#5a7ab0"/></svg>
<div class="a" style="left:411.00px;top:597.80px;width:45.00px;height:11.00px;background:#ececec;border:1px dotted #c8d0e0;"></div>
<div class="t " style="top:600.98px;font-size:5.8px;color:#555;left:413.00px;">Last Name</div>
<div class="a" style="left:457.00px;top:597.80px;width:174.00px;height:11.00px;background:#fff;border:1px solid #a8a8a8;"></div>
<div class="t " style="top:600.98px;font-size:5.8px;color:#222;left:459.50px;">Rock</div>
<div class="a" style="left:411.00px;top:611.00px;width:45.00px;height:11.00px;background:#ececec;border:1px dotted #c8d0e0;"></div>
<div class="t " style="top:614.18px;font-size:5.8px;color:#555;left:413.00px;">City</div>
<div class="a" style="left:457.00px;top:611.00px;width:174.00px;height:11.00px;background:#fff;border:1px solid #a8a8a8;"></div>
<div class="t " style="top:614.18px;font-size:5.8px;color:#222;left:459.50px;">HORSE CREEK</div>
<div class="a" style="left:411.00px;top:624.20px;width:45.00px;height:11.00px;background:#ececec;border:1px dotted #c8d0e0;"></div>
<div class="t " style="top:627.38px;font-size:5.8px;color:#555;left:413.00px;">State</div>
<div class="a" style="left:457.00px;top:624.20px;width:20.50px;height:11.00px;background:#fff;border:1px solid #a8a8a8;"></div>
<div class="t " style="top:627.38px;font-size:5.8px;color:#222;left:459.50px;">CA</div>
<div class="a" style="left:488.00px;top:624.20px;width:17.00px;height:11.00px;background:#ececec;border:1px dotted #c8d0e0;"></div>
<div class="t " style="top:627.38px;font-size:5.8px;color:#555;left:490.00px;">Zip</div>
<div class="a" style="left:505.00px;top:624.20px;width:126.00px;height:11.00px;background:#fff;border:1px solid #a8a8a8;"></div>
<div class="t " style="top:627.38px;font-size:5.8px;color:#222;left:507.50px;">96050</div>
<div class="a" style="left:411.00px;top:637.40px;width:45.00px;height:11.00px;background:#ececec;border:1px dotted #c8d0e0;"></div>
<div class="t " style="top:640.58px;font-size:5.8px;color:#555;left:413.00px;">County</div>
<div class="a" style="left:457.00px;top:637.40px;width:174.00px;height:11.00px;background:#fff;border:1px solid #a8a8a8;"></div>
<div class="t " style="top:640.58px;font-size:5.8px;color:#222;left:459.50px;">CITY OF LA</div>
<div class="a" style="left:411.00px;top:652.30px;width:45.00px;height:11.00px;background:#ececec;border:1px dotted #c8d0e0;"></div>
<div class="t " style="top:655.48px;font-size:5.8px;color:#555;left:413.00px;">Web Address</div>
<div class="a" style="left:457.00px;top:652.30px;width:174.00px;height:11.00px;background:#fff;border:1px solid #a8a8a8;"></div>
<svg class="a" style="left:633.00px;top:598.30px" width="10" height="10" viewBox="0 0 10 10"><rect x="0.5" y="0.5" width="9" height="9" fill="#e0e0e0" stroke="#bbb" stroke-width="0.6"/><circle cx="5" cy="5" r="2.5" fill="#7a9ad0"/></svg>
<svg class="a" style="left:633.00px;top:652.80px" width="10" height="10" viewBox="0 0 10 10"><rect x="0.5" y="0.5" width="9" height="9" fill="#e0e0e0" stroke="#bbb" stroke-width="0.6"/><circle cx="5" cy="5" r="2.5" fill="#7a9ad0"/></svg>
<div class="t " style="top:668.68px;font-size:5.8px;color:#555;left:267.00px;">Phone Numbers</div>
<div class="a" style="left:312.00px;top:671.50px;width:331.00px;height:0;border-top:1px dashed #b8c0d0"></div>
<div class="a" style="left:267.00px;top:677.30px;width:44.00px;height:11.00px;background:#e6e6e6;border:1px solid #d0d0d0;"></div>
<svg class="a" style="left:302.00px;top:679.80px" width="7" height="6" viewBox="0 0 7 6"><path d="M1.5,1.8 L3.5,3.8 L5.5,1.8" stroke="#555" fill="none" stroke-width="0.9"/></svg>
<div class="a" style="left:311.00px;top:677.30px;width:95.00px;height:11.00px;background:#fff;border:1px solid #a8a8a8;"></div>
<div class="t " style="top:680.48px;font-size:5.8px;color:#222;left:313.50px;">(446)580-1807</div>
<div class="a" style="left:412.00px;top:677.30px;width:45.00px;height:11.00px;background:#e6e6e6;border:1px solid #d0d0d0;"></div>
<svg class="a" style="left:448.00px;top:679.80px" width="7" height="6" viewBox="0 0 7 6"><path d="M1.5,1.8 L3.5,3.8 L5.5,1.8" stroke="#555" fill="none" stroke-width="0.9"/></svg>
<div class="a" style="left:457.00px;top:677.30px;width:185.00px;height:11.00px;background:#fff;border:1px solid #a8a8a8;"></div>
<div class="a" style="left:267.00px;top:690.50px;width:44.00px;height:11.00px;background:#e6e6e6;border:1px solid #d0d0d0;"></div>
<svg class="a" style="left:302.00px;top:693.00px" width="7" height="6" viewBox="0 0 7 6"><path d="M1.5,1.8 L3.5,3.8 L5.5,1.8" stroke="#555" fill="none" stroke-width="0.9"/></svg>
<div class="a" style="left:311.00px;top:690.50px;width:95.00px;height:11.00px;background:#fff;border:1px solid #a8a8a8;"></div>
<div class="t " style="top:693.68px;font-size:5.8px;color:#222;left:313.50px;">(610)480-3809</div>
<div class="a" style="left:412.00px;top:690.50px;width:45.00px;height:11.00px;background:#e6e6e6;border:1px solid #d0d0d0;"></div>
<svg class="a" style="left:448.00px;top:693.00px" width="7" height="6" viewBox="0 0 7 6"><path d="M1.5,1.8 L3.5,3.8 L5.5,1.8" stroke="#555" fill="none" stroke-width="0.9"/></svg>
<div class="a" style="left:457.00px;top:690.50px;width:185.00px;height:11.00px;background:#fff;border:1px solid #a8a8a8;"></div>
<div class="a" style="left:652.00px;top:591.00px;width:178.00px;height:114.00px;border:1px dotted #d0d0d0;"></div>
<div class="a" style="left:655.00px;top:587.50px;width:48.00px;height:7.00px;background:#f0f0f0;"></div>
<div class="t " style="top:588.88px;font-size:5.8px;color:#333;left:657.00px;">Relation to Client</div>
<div class="a" style="left:661.00px;top:596.30px;width:165.00px;height:11.00px;background:#e6e6e6;border:1px solid #d0d0d0;"></div>
<div class="t " style="top:599.48px;font-size:5.8px;color:#222;left:663.50px;">[Parent/Guardian]</div>
<svg class="a" style="left:817.00px;top:598.80px" width="7" height="6" viewBox="0 0 7 6"><path d="M1.5,1.8 L3.5,3.8 L5.5,1.8" stroke="#555" fill="none" stroke-width="0.9"/></svg>
<div class="a" style="left:661.00px;top:610.30px;width:165.00px;height:11.00px;background:#e6e6e6;border:1px solid #d0d0d0;"></div>
<div class="t " style="top:613.48px;font-size:5.8px;color:#222;left:663.50px;">Parents</div>
<svg class="a" style="left:817.00px;top:612.80px" width="7" height="6" viewBox="0 0 7 6"><path d="M1.5,1.8 L3.5,3.8 L5.5,1.8" stroke="#555" fill="none" stroke-width="0.9"/></svg>
<svg class="a" style="left:661.00px;top:624.00px" width="8" height="8" viewBox="0 0 8 8"><rect x="0.5" y="0.5" width="7" height="7" fill="#fff" stroke="#777" stroke-width="0.8"/><path d="M1.8,4 L3.4,5.8 L6.2,1.8" stroke="#444" fill="none" stroke-width="0.9"/></svg>
<div class="t " style="top:625.18px;font-size:5.8px;color:#444;left:670.00px;">Legal Guardian</div>
<svg class="a" style="left:737.00px;top:624.00px" width="8" height="8" viewBox="0 0 8 8"><rect x="0.5" y="0.5" width="7" height="7" fill="#fff" stroke="#777" stroke-width="0.8"/><path d="M1.8,4 L3.4,5.8 L6.2,1.8" stroke="#444" fill="none" stroke-width="0.9"/></svg>
<div class="t " style="top:625.18px;font-size:5.8px;color:#444;left:746.00px;">Resides with client</div>
<svg class="a" style="left:737.00px;top:636.00px" width="8" height="8" viewBox="0 0 8 8"><rect x="0.5" y="0.5" width="7" height="7" fill="#fff" stroke="#777" stroke-width="0.8"/></svg>
<div class="t " style="top:637.18px;font-size:5.8px;color:#444;left:746.00px;">Parent Portal Access</div>
<div class="a" style="left:652.00px;top:709.00px;width:178.00px;height:22.00px;border:1px dotted #d8d8d8;"></div>
<div class="a" style="left:657.00px;top:714.00px;width:38.00px;height:11.00px;background:#ececec;border:1px dotted #c8d0e0;"></div>
<div class="t " style="top:717.18px;font-size:5.8px;color:#555;left:659.00px;">Tracking ID</div>
<div class="a" style="left:695.00px;top:714.00px;width:131.00px;height:11.00px;background:#fff;border:1px solid #a8a8a8;"></div>
<div class="t " style="top:717.18px;font-size:5.8px;color:#222;left:697.50px;">[Custom]</div>
<svg class="a" style="left:817.00px;top:716.50px" width="7" height="6" viewBox="0 0 7 6"><path d="M1.5,1.8 L3.5,3.8 L5.5,1.8" stroke="#555" fill="none" stroke-width="0.9"/></svg>
<div class="a" style="left:252.00px;top:733.50px;width:582.00px;height:0;border-top:1px dotted #c8c8c8"></div>
<div class="a" style="left:252.00px;top:734.50px;width:583.00px;height:11.50px;background:#f0f0f0;"></div>
<div class="a" style="left:252.00px;top:746.00px;width:583.00px;height:1.00px;background:#9aa0b8;"></div>
<svg class="a" style="left:826.00px;top:737.00px" width="8" height="8" viewBox="0 0 8 8"><g fill="#999"><rect x="6" y="2" width="1" height="1"/><rect x="4" y="4" width="1" height="1"/><rect x="6" y="4" width="1" height="1"/><rect x="2" y="6" width="1" height="1"/><rect x="4" y="6" width="1" height="1"/><rect x="6" y="6" width="1" height="1"/></g></svg>
<div class="a" style="left:1225.00px;top:401.50px;width:518.00px;height:355.50px;background:#f0f0f0;border:1px solid #8a9ac0;"></div>
<div class="a" style="left:1226.00px;top:402.00px;width:516.00px;height:27.00px;background:#641e91;"></div>
<svg class="a" style="left:1229.00px;top:406.00px" width="8" height="8" viewBox="0 0 8 8"><rect x="0.5" y="1" width="7" height="6.5" fill="#fff"/><rect x="0.5" y="1" width="7" height="1.5" fill="#ddd"/><circle cx="2.5" cy="4.5" r="1.2" fill="#e00"/></svg>
<div class="t " style="top:408.06px;font-size:5.35px;color:#fff;left:1482.00px;transform:translateX(-50%);">Client Schedule - Barrymore, Drew</div>
<div class="a" style="left:1678.00px;top:410.00px;width:6.00px;height:1.00px;background:#e4dcec;"></div>
<div class="a" style="left:1702.30px;top:406.80px;width:6.50px;height:6.50px;border:1px solid #e4dcec;"></div>
<svg class="a" style="left:1726.90px;top:406.90px" width="6.2" height="6.2" viewBox="0 0 6.2 6.2"><path d="M0,0 L6.2,6.2 M6.2,0 L0,6.2" stroke="#e4dcec" stroke-width="0.9"/></svg>
<div class="a" style="left:1228.00px;top:418.50px;width:36.00px;height:10.50px;background:#f0f0f0;"></div>
<div class="t " style="top:422.06px;font-size:5.6px;color:#555;left:1246.00px;transform:translateX(-50%);">Schedule</div>
<div class="a" style="left:1326.00px;top:432.00px;width:1.00px;height:41.00px;background:#d8d8d8;"></div>
<div class="a" style="left:1366.00px;top:432.00px;width:1.00px;height:41.00px;background:#d8d8d8;"></div>
<div class="a" style="left:1442.00px;top:432.00px;width:1.00px;height:41.00px;background:#d8d8d8;"></div>
<div class="a" style="left:1519.00px;top:432.00px;width:1.00px;height:41.00px;background:#d8d8d8;"></div>
<div class="a" style="left:1590.00px;top:432.00px;width:1.00px;height:41.00px;background:#d8d8d8;"></div>
<div class="a" style="left:1645.00px;top:432.00px;width:1.00px;height:41.00px;background:#d8d8d8;"></div>
<div class="a" style="left:1689.00px;top:432.00px;width:1.00px;height:41.00px;background:#d8d8d8;"></div>
<div class="a" style="left:1718.00px;top:432.00px;width:1.00px;height:41.00px;background:#d8d8d8;"></div>
<svg class="a" style="left:1233.00px;top:433.20px" width="15" height="15" viewBox="0 -1 15 15"><path d="M1.5,0.8 H12 V13.2 H1.5 Z" fill="#fff" stroke="#5a3a8a" stroke-width="1.5"/><rect x="3.2" y="2" width="7" height="3.5" fill="#f4f4f4" stroke="#bbb" stroke-width="0.5"/><rect x="3.5" y="9" width="7" height="4" fill="#fff"/><rect x="5" y="10" width="1.6" height="3" fill="#5a3a8a"/></svg>
<div class="t " style="top:451.52px;font-size:5.7px;color:#444;left:1239.50px;transform:translateX(-50%);">Save</div>
<svg class="a" style="left:1256.50px;top:433.20px" width="15" height="15" viewBox="0 -1 15 15"><path d="M1.5,0.8 H12 V13.2 H1.5 Z" fill="#fff" stroke="#5a3a8a" stroke-width="1.5"/><rect x="3.2" y="2" width="7" height="3.5" fill="#f4f4f4" stroke="#bbb" stroke-width="0.5"/><rect x="3.5" y="9" width="7" height="4" fill="#fff"/><rect x="5" y="10" width="1.6" height="3" fill="#5a3a8a"/><rect x="9.5" y="-1.5" width="6" height="5.5" fill="#ea6e5e"/><path d="M11,-0.3 L14,2.8 M14,-0.3 L11,2.8" stroke="#fff" stroke-width="0.7"/></svg>
<div class="t " style="top:451.52px;font-size:5.7px;color:#444;left:1263.00px;transform:translateX(-50%);">Save &amp;</div>
<div class="t " style="top:458.42px;font-size:5.7px;color:#444;left:1263.00px;transform:translateX(-50%);">Close</div>
<svg class="a" style="left:1281.00px;top:433.00px" width="14" height="14" viewBox="0 0 14 14"><path d="M2.2,6 A5,5 0 0 1 11.3,4" fill="none" stroke="#2a6ab8" stroke-width="1.8"/><path d="M11.8,8 A5,5 0 0 1 2.7,10" fill="none" stroke="#2a6ab8" stroke-width="1.8"/><path d="M9,4.5 L13,5 L12.5,1 Z" fill="#2a6ab8"/><path d="M5,9.5 L1,9 L1.5,13 Z" fill="#2a6ab8"/></svg>
<div class="t " style="top:451.52px;font-size:5.7px;color:#444;left:1287.50px;transform:translateX(-50%);">Refresh</div>
<div class="t " style="top:458.42px;font-size:5.7px;color:#444;left:1287.50px;transform:translateX(-50%);">All</div>
<svg class="a" style="left:1304.50px;top:432.70px" width="15" height="15" viewBox="0 0 15 15"><rect x="0" y="0" width="15" height="15" fill="#ea6e5e"/><path d="M3,3 L12,12 M12,3 L3,12" stroke="#fff" stroke-width="1.6"/></svg>
<div class="t " style="top:451.52px;font-size:5.7px;color:#444;left:1312.00px;transform:translateX(-50%);">Cancel</div>
<div class="t " style="top:468.72px;font-size:5.7px;color:#444;left:1276.00px;transform:translateX(-50%);">Client Schedule</div>
<svg class="a" style="left:1339.00px;top:434.00px" width="14" height="12" viewBox="0 0 14 12"><path d="M1.5,6 L5,9.5 L12.5,1.5" stroke="#7a7a9a" fill="none" stroke-width="1.8"/></svg>
<div class="t " style="top:451.52px;font-size:5.7px;color:#444;left:1346.00px;transform:translateX(-50%);">Validate</div>
<div class="t " style="top:468.72px;font-size:5.7px;color:#444;left:1346.00px;transform:translateX(-50%);">Schedule</div>
<svg class="a" style="left:1373.50px;top:434.20px" width="12" height="12" viewBox="0 0 12 12"><path d="M6.0,0 V12 M0,6.0 H12" stroke="#3d73b6" stroke-width="2"/></svg>
<div class="t " style="top:451.52px;font-size:5.7px;color:#444;left:1379.50px;transform:translateX(-50%);">Add</div>
<svg class="a" style="left:1397.00px;top:434.20px" width="12" height="12" viewBox="0 0 12 12"><path d="M2,10 L9.5,2.5" stroke="#2a6ab8" stroke-width="2.2"/><path d="M1.2,10.8 L2.3,8.8 L3.2,9.7 Z" fill="#2a6ab8"/></svg>
<div class="t " style="top:451.52px;font-size:5.7px;color:#444;left:1402.50px;transform:translateX(-50%);">Edit</div>
<svg class="a" style="left:1421.00px;top:434.20px" width="12" height="12" viewBox="0 0 12 12"><path d="M1,1 L11,11 M11,1 L1,11" stroke="#e8705f" stroke-width="2"/></svg>
<div class="t " style="top:451.52px;font-size:5.7px;color:#444;left:1427.00px;transform:translateX(-50%);">Remove</div>
<svg class="a" style="left:1450.00px;top:434.20px" width="12" height="12" viewBox="0 0 12 12"><path d="M6.0,0 V12 M0,6.0 H12" stroke="#3d73b6" stroke-width="2"/></svg>
<div class="t " style="top:451.52px;font-size:5.7px;color:#444;left:1456.00px;transform:translateX(-50%);">Add</div>
<svg class="a" style="left:1473.50px;top:434.20px" width="12" height="12" viewBox="0 0 12 12"><path d="M2,10 L9.5,2.5" stroke="#2a6ab8" stroke-width="2.2"/><path d="M1.2,10.8 L2.3,8.8 L3.2,9.7 Z" fill="#2a6ab8"/></svg>
<div class="t " style="top:451.52px;font-size:5.7px;color:#444;left:1479.00px;transform:translateX(-50%);">Edit</div>
<svg class="a" style="left:1497.50px;top:434.20px" width="12" height="12" viewBox="0 0 12 12"><path d="M1,1 L11,11 M11,1 L1,11" stroke="#e8705f" stroke-width="2"/></svg>
<div class="t " style="top:451.52px;font-size:5.7px;color:#444;left:1503.50px;transform:translateX(-50%);">Remove</div>
<div class="t " style="top:468.72px;font-size:5.7px;color:#444;left:1404.00px;transform:translateX(-50%);">Appointment</div>
<div class="t " style="top:468.72px;font-size:5.7px;color:#444;left:1480.50px;transform:translateX(-50%);">Availability</div>
<svg class="a" style="left:1527.00px;top:433.00px" width="13" height="14" viewBox="0 0 13 14"><rect x="1" y="2" width="11" height="11.5" fill="#f0f0c0" stroke="#c8c830" stroke-width="1"/><rect x="4" y="0.5" width="5" height="2.5" fill="#aaa"/><rect x="3.5" y="5" width="6" height="5" fill="#ccd" stroke="#99a" stroke-width="0.6"/></svg>
<div class="t " style="top:451.52px;font-size:5.7px;color:#444;left:1533.50px;transform:translateX(-50%);">Service</div>
<div class="t " style="top:458.42px;font-size:5.7px;color:#444;left:1533.50px;transform:translateX(-50%);">Actions</div>
<svg class="a" style="left:1558.00px;top:433.00px" width="16" height="15" viewBox="0 0 16 15"><rect x="8" y="1" width="2" height="8" fill="#c8c830"/><rect x="11.5" y="4" width="2" height="8" fill="#2a6ab8"/><rect x="4.5" y="3" width="2" height="3" fill="#2a6ab8"/><circle cx="6" cy="9" r="3" fill="#fff" stroke="#2a6ab8" stroke-width="1.2"/><path d="M4,11 L1,14.5" stroke="#2a6ab8" stroke-width="1.5"/></svg>
<div class="t " style="top:451.52px;font-size:5.7px;color:#444;left:1567.50px;transform:translateX(-50%);">Payroll Time &amp;</div>
<div class="t " style="top:458.42px;font-size:5.7px;color:#444;left:1567.50px;transform:translateX(-50%);">Travel Mileage</div>
<div class="t " style="top:468.72px;font-size:5.7px;color:#444;left:1554.00px;transform:translateX(-50%);">Review</div>
<svg class="a" style="left:1599.00px;top:433.00px" width="13" height="14" viewBox="0 0 13 14"><path d="M2.5,0.5 H8 L11,3.5 V13 H2.5 Z" fill="#fff" stroke="#aaa" stroke-width="0.8"/><circle cx="6" cy="8" r="2.8" fill="none" stroke="#2a6ab8" stroke-width="1.2"/><path d="M4,10 L1,13" stroke="#2a6ab8" stroke-width="1.4"/></svg>
<div class="t " style="top:451.52px;font-size:5.7px;color:#444;left:1605.50px;transform:translateX(-50%);">Preview</div>
<svg class="a" style="left:1624.00px;top:432.50px" width="14" height="15" viewBox="0 0 14 15"><circle cx="5" cy="10" r="2.6" fill="none" stroke="#2a6ab8" stroke-width="2.34"/><circle cx="5" cy="10" r="4.03" fill="none" stroke="#2a6ab8" stroke-width="1.30" stroke-dasharray="1.95 2.21"/><circle cx="10.5" cy="3.8" r="1.7" fill="none" stroke="#2a6ab8" stroke-width="1.53"/><circle cx="10.5" cy="3.8" r="2.63" fill="none" stroke="#2a6ab8" stroke-width="0.85" stroke-dasharray="1.27 1.44"/></svg>
<div class="t " style="top:451.52px;font-size:5.7px;color:#444;left:1630.50px;transform:translateX(-50%);">Options</div>
<div class="t " style="top:468.72px;font-size:5.7px;color:#444;left:1617.50px;transform:translateX(-50%);">Print</div>
<svg class="a" style="left:1660.00px;top:433.00px" width="15" height="14" viewBox="0 0 15 14"><path d="M0.5,1.5 H5 L6,3 H13 V10 H0.5 Z" fill="#2a7ac8"/><rect x="3" y="5" width="11" height="7.5" fill="#fff" stroke="#2a7ac8" stroke-width="1"/></svg>
<div class="t " style="top:451.52px;font-size:5.7px;color:#444;left:1667.00px;transform:translateX(-50%);">DocCenter</div>
<div class="t " style="top:468.72px;font-size:5.7px;color:#444;left:1667.00px;transform:translateX(-50%);">Documents</div>
<svg class="a" style="left:1698.00px;top:434.00px" width="12" height="12" viewBox="0 0 12 12"><rect x="0.5" y="0.5" width="3" height="3" fill="#2a6ab8"/><rect x="0.5" y="4.5" width="3" height="3" fill="#c8c830"/><rect x="0.5" y="8.5" width="3" height="3" fill="#7a7aa0"/><path d="M5,1.5 H11 M5,5.5 H11 M5,9.5 H11" stroke="#bbb" stroke-width="1"/></svg>
<div class="t " style="top:451.52px;font-size:5.7px;color:#444;left:1704.00px;transform:translateX(-50%);">Legend</div>
<div class="a" style="left:1703.50px;top:459.50px;width:1.20px;height:1.20px;background:#555;"></div>
<div class="t " style="top:468.72px;font-size:5.7px;color:#444;left:1704.00px;transform:translateX(-50%);">Help</div>
<svg class="a" style="left:1730.00px;top:466.00px" width="9" height="7" viewBox="0 0 9 7"><path d="M1,5.5 L4.5,2 L8,5.5" stroke="#888" fill="none" stroke-width="1"/><path d="M2,6.5 H7" stroke="#aaa" stroke-width="0.8"/></svg>
<div class="a" style="left:1226.00px;top:476.00px;width:516.00px;height:0;border-top:1px dotted #c0c4d0"></div>
<div class="a" style="left:1226.00px;top:477.00px;width:31.00px;height:267.00px;background:#f5f5f5;"></div>
<div class="a" style="left:1257.00px;top:477.00px;width:394.00px;height:9.00px;background:#fff;"></div>
<div class="a" style="left:1258.00px;top:477.50px;width:77.00px;height:8.50px;background:#f6f6f6;border:1px solid #e6e6e6;"></div>
<div class="t " style="top:479.52px;font-size:5.7px;color:#444;left:1299.50px;transform:translateX(-50%);letter-spacing:0.05px;">Monday, March 18, 2019</div>
<div class="a" style="left:1337.00px;top:477.50px;width:77.00px;height:8.50px;background:#f6f6f6;border:1px solid #e6e6e6;"></div>
<div class="t " style="top:479.52px;font-size:5.7px;color:#444;left:1373.50px;transform:translateX(-50%);letter-spacing:0.05px;">Tuesday, March 19, 2019</div>
<div class="a" style="left:1416.00px;top:477.50px;width:77.00px;height:8.50px;background:#f6f6f6;border:1px solid #e6e6e6;"></div>
<div class="t " style="top:479.52px;font-size:5.7px;color:#444;left:1452.00px;transform:translateX(-50%);letter-spacing:0.05px;">Wednesday, March 20, 2019</div>
<div class="a" style="left:1495.00px;top:477.50px;width:76.00px;height:8.50px;background:#f6f6f6;border:1px solid #e6e6e6;"></div>
<div class="t " style="top:479.52px;font-size:5.7px;color:#444;left:1530.60px;transform:translateX(-50%);letter-spacing:0.05px;">Thursday, March 21, 2019</div>
<div class="a" style="left:1573.00px;top:477.50px;width:77.00px;height:8.50px;background:#f6f6f6;border:1px solid #e6e6e6;"></div>
<div class="t " style="top:479.52px;font-size:5.7px;color:#444;left:1605.50px;transform:translateX(-50%);letter-spacing:0.05px;">Friday, March 22, 2019</div>
<div class="t " style="top:478.20px;font-size:9px;color:#222;font-weight:bold;left:1261.00px;transform:translateX(-50%);">‹</div>
<div class="t " style="top:478.20px;font-size:9px;color:#222;font-weight:bold;left:1645.50px;transform:translateX(-50%);">›</div>
<div class="a" style="left:1257.00px;top:486.00px;width:394.00px;height:17.60px;background:linear-gradient(#dedede 0%,#c6c2c8 30%,#bcb8c0 70%,#b0aab2 100%);"></div>
<div class="a" style="left:1257.00px;top:503.60px;width:394.00px;height:240.40px;background:#fff;"></div>
<div class="a" style="left:1258.50px;top:503.60px;width:76.50px;height:173.25px;background:#fdfdc0;"></div>
<div class="a" style="left:1258.50px;top:676.85px;width:76.50px;height:67.15px;background:#c2c000;"></div>
<div class="a" style="left:1257.00px;top:486.00px;width:1.00px;height:17.60px;background:#8a8a98;"></div>
<div class="a" style="left:1337.50px;top:503.60px;width:76.50px;height:173.25px;background:#fdfdc0;"></div>
<div class="a" style="left:1337.50px;top:676.85px;width:76.50px;height:67.15px;background:#c2c000;"></div>
<div class="a" style="left:1336.00px;top:486.00px;width:1.00px;height:17.60px;background:#8a8a98;"></div>
<div class="a" style="left:1416.50px;top:503.60px;width:75.50px;height:173.25px;background:#fdfdc0;"></div>
<div class="a" style="left:1416.50px;top:676.85px;width:75.50px;height:67.15px;background:#c2c000;"></div>
<div class="a" style="left:1415.00px;top:486.00px;width:1.00px;height:17.60px;background:#8a8a98;"></div>
<div class="a" style="left:1495.00px;top:503.60px;width:76.00px;height:173.25px;background:#fdfdc0;"></div>
<div class="a" style="left:1495.00px;top:676.85px;width:76.00px;height:67.15px;background:#c2c000;"></div>
<div class="a" style="left:1493.50px;top:486.00px;width:1.00px;height:17.60px;background:#8a8a98;"></div>
<div class="a" style="left:1573.00px;top:503.60px;width:77.50px;height:173.25px;background:#fdfdc0;"></div>
<div class="a" style="left:1573.00px;top:676.85px;width:77.50px;height:67.15px;background:#c2c000;"></div>
<div class="a" style="left:1571.50px;top:486.00px;width:1.00px;height:17.60px;background:#8a8a98;"></div>
<div class="a" style="left:1259.50px;top:513.23px;width:75.50px;height:0;border-top:1px dotted #d8d8c8"></div>
<div class="a" style="left:1338.50px;top:513.23px;width:75.50px;height:0;border-top:1px dotted #d8d8c8"></div>
<div class="a" style="left:1417.50px;top:513.23px;width:74.50px;height:0;border-top:1px dotted #d8d8c8"></div>
<div class="a" style="left:1496.00px;top:513.23px;width:75.00px;height:0;border-top:1px dotted #d8d8c8"></div>
<div class="a" style="left:1574.00px;top:513.23px;width:76.50px;height:0;border-top:1px dotted #d8d8c8"></div>
<div class="a" style="left:1259.50px;top:522.85px;width:75.50px;height:0;border-top:1px dotted #d8d8c8"></div>
<div class="a" style="left:1338.50px;top:522.85px;width:75.50px;height:0;border-top:1px dotted #d8d8c8"></div>
<div class="a" style="left:1417.50px;top:522.85px;width:74.50px;height:0;border-top:1px dotted #d8d8c8"></div>
<div class="a" style="left:1496.00px;top:522.85px;width:75.00px;height:0;border-top:1px dotted #d8d8c8"></div>
<div class="a" style="left:1574.00px;top:522.85px;width:76.50px;height:0;border-top:1px dotted #d8d8c8"></div>
<div class="a" style="left:1259.50px;top:532.48px;width:75.50px;height:0;border-top:1px dotted #d8d8c8"></div>
<div class="a" style="left:1338.50px;top:532.48px;width:75.50px;height:0;border-top:1px dotted #d8d8c8"></div>
<div class="a" style="left:1417.50px;top:532.48px;width:74.50px;height:0;border-top:1px dotted #d8d8c8"></div>
<div class="a" style="left:1496.00px;top:532.48px;width:75.00px;height:0;border-top:1px dotted #d8d8c8"></div>
<div class="a" style="left:1574.00px;top:532.48px;width:76.50px;height:0;border-top:1px dotted #d8d8c8"></div>
<div class="a" style="left:1259.50px;top:542.10px;width:75.50px;height:0;border-top:1px dotted #d8d8c8"></div>
<div class="a" style="left:1338.50px;top:542.10px;width:75.50px;height:0;border-top:1px dotted #d8d8c8"></div>
<div class="a" style="left:1417.50px;top:542.10px;width:74.50px;height:0;border-top:1px dotted #d8d8c8"></div>
<div class="a" style="left:1496.00px;top:542.10px;width:75.00px;height:0;border-top:1px dotted #d8d8c8"></div>
<div class="a" style="left:1574.00px;top:542.10px;width:76.50px;height:0;border-top:1px dotted #d8d8c8"></div>
<div class="a" style="left:1259.50px;top:551.73px;width:75.50px;height:0;border-top:1px dotted #d8d8c8"></div>
<div class="a" style="left:1338.50px;top:551.73px;width:75.50px;height:0;border-top:1px dotted #d8d8c8"></div>
<div class="a" style="left:1417.50px;top:551.73px;width:74.50px;height:0;border-top:1px dotted #d8d8c8"></div>
<div class="a" style="left:1496.00px;top:551.73px;width:75.00px;height:0;border-top:1px dotted #d8d8c8"></div>
<div class="a" style="left:1574.00px;top:551.73px;width:76.50px;height:0;border-top:1px dotted #d8d8c8"></div>
<div class="a" style="left:1259.50px;top:561.35px;width:75.50px;height:0;border-top:1px dotted #d8d8c8"></div>
<div class="a" style="left:1338.50px;top:561.35px;width:75.50px;height:0;border-top:1px dotted #d8d8c8"></div>
<div class="a" style="left:1417.50px;top:561.35px;width:74.50px;height:0;border-top:1px dotted #d8d8c8"></div>
<div class="a" style="left:1496.00px;top:561.35px;width:75.00px;height:0;border-top:1px dotted #d8d8c8"></div>
<div class="a" style="left:1574.00px;top:561.35px;width:76.50px;height:0;border-top:1px dotted #d8d8c8"></div>
<div class="a" style="left:1259.50px;top:570.98px;width:75.50px;height:0;border-top:1px dotted #d8d8c8"></div>
<div class="a" style="left:1338.50px;top:570.98px;width:75.50px;height:0;border-top:1px dotted #d8d8c8"></div>
<div class="a" style="left:1417.50px;top:570.98px;width:74.50px;height:0;border-top:1px dotted #d8d8c8"></div>
<div class="a" style="left:1496.00px;top:570.98px;width:75.00px;height:0;border-top:1px dotted #d8d8c8"></div>
<div class="a" style="left:1574.00px;top:570.98px;width:76.50px;height:0;border-top:1px dotted #d8d8c8"></div>
<div class="a" style="left:1259.50px;top:580.60px;width:75.50px;height:0;border-top:1px dotted #d8d8c8"></div>
<div class="a" style="left:1338.50px;top:580.60px;width:75.50px;height:0;border-top:1px dotted #d8d8c8"></div>
<div class="a" style="left:1417.50px;top:580.60px;width:74.50px;height:0;border-top:1px dotted #d8d8c8"></div>
<div class="a" style="left:1496.00px;top:580.60px;width:75.00px;height:0;border-top:1px dotted #d8d8c8"></div>
<div class="a" style="left:1574.00px;top:580.60px;width:76.50px;height:0;border-top:1px dotted #d8d8c8"></div>
<div class="a" style="left:1259.50px;top:590.23px;width:75.50px;height:0;border-top:1px dotted #d8d8c8"></div>
<div class="a" style="left:1338.50px;top:590.23px;width:75.50px;height:0;border-top:1px dotted #d8d8c8"></div>
<div class="a" style="left:1417.50px;top:590.23px;width:74.50px;height:0;border-top:1px dotted #d8d8c8"></div>
<div class="a" style="left:1496.00px;top:590.23px;width:75.00px;height:0;border-top:1px dotted #d8d8c8"></div>
<div class="a" style="left:1574.00px;top:590.23px;width:76.50px;height:0;border-top:1px dotted #d8d8c8"></div>
<div class="a" style="left:1259.50px;top:599.85px;width:75.50px;height:0;border-top:1px dotted #d8d8c8"></div>
<div class="a" style="left:1338.50px;top:599.85px;width:75.50px;height:0;border-top:1px dotted #d8d8c8"></div>
<div class="a" style="left:1417.50px;top:599.85px;width:74.50px;height:0;border-top:1px dotted #d8d8c8"></div>
<div class="a" style="left:1496.00px;top:599.85px;width:75.00px;height:0;border-top:1px dotted #d8d8c8"></div>
<div class="a" style="left:1574.00px;top:599.85px;width:76.50px;height:0;border-top:1px dotted #d8d8c8"></div>
<div class="a" style="left:1259.50px;top:609.48px;width:75.50px;height:0;border-top:1px dotted #d8d8c8"></div>
<div class="a" style="left:1338.50px;top:609.48px;width:75.50px;height:0;border-top:1px dotted #d8d8c8"></div>
<div class="a" style="left:1417.50px;top:609.48px;width:74.50px;height:0;border-top:1px dotted #d8d8c8"></div>
<div class="a" style="left:1496.00px;top:609.48px;width:75.00px;height:0;border-top:1px dotted #d8d8c8"></div>
<div class="a" style="left:1574.00px;top:609.48px;width:76.50px;height:0;border-top:1px dotted #d8d8c8"></div>
<div class="a" style="left:1259.50px;top:619.10px;width:75.50px;height:0;border-top:1px dotted #d8d8c8"></div>
<div class="a" style="left:1338.50px;top:619.10px;width:75.50px;height:0;border-top:1px dotted #d8d8c8"></div>
<div class="a" style="left:1417.50px;top:619.10px;width:74.50px;height:0;border-top:1px dotted #d8d8c8"></div>
<div class="a" style="left:1496.00px;top:619.10px;width:75.00px;height:0;border-top:1px dotted #d8d8c8"></div>
<div class="a" style="left:1574.00px;top:619.10px;width:76.50px;height:0;border-top:1px dotted #d8d8c8"></div>
<div class="a" style="left:1259.50px;top:628.73px;width:75.50px;height:0;border-top:1px dotted #d8d8c8"></div>
<div class="a" style="left:1338.50px;top:628.73px;width:75.50px;height:0;border-top:1px dotted #d8d8c8"></div>
<div class="a" style="left:1417.50px;top:628.73px;width:74.50px;height:0;border-top:1px dotted #d8d8c8"></div>
<div class="a" style="left:1496.00px;top:628.73px;width:75.00px;height:0;border-top:1px dotted #d8d8c8"></div>
<div class="a" style="left:1574.00px;top:628.73px;width:76.50px;height:0;border-top:1px dotted #d8d8c8"></div>
<div class="a" style="left:1259.50px;top:638.35px;width:75.50px;height:0;border-top:1px dotted #d8d8c8"></div>
<div class="a" style="left:1338.50px;top:638.35px;width:75.50px;height:0;border-top:1px dotted #d8d8c8"></div>
<div class="a" style="left:1417.50px;top:638.35px;width:74.50px;height:0;border-top:1px dotted #d8d8c8"></div>
<div class="a" style="left:1496.00px;top:638.35px;width:75.00px;height:0;border-top:1px dotted #d8d8c8"></div>
<div class="a" style="left:1574.00px;top:638.35px;width:76.50px;height:0;border-top:1px dotted #d8d8c8"></div>
<div class="a" style="left:1259.50px;top:647.98px;width:75.50px;height:0;border-top:1px dotted #d8d8c8"></div>
<div class="a" style="left:1338.50px;top:647.98px;width:75.50px;height:0;border-top:1px dotted #d8d8c8"></div>
<div class="a" style="left:1417.50px;top:647.98px;width:74.50px;height:0;border-top:1px dotted #d8d8c8"></div>
<div class="a" style="left:1496.00px;top:647.98px;width:75.00px;height:0;border-top:1px dotted #d8d8c8"></div>
<div class="a" style="left:1574.00px;top:647.98px;width:76.50px;height:0;border-top:1px dotted #d8d8c8"></div>
<div class="a" style="left:1259.50px;top:657.60px;width:75.50px;height:0;border-top:1px dotted #d8d8c8"></div>
<div class="a" style="left:1338.50px;top:657.60px;width:75.50px;height:0;border-top:1px dotted #d8d8c8"></div>
<div class="a" style="left:1417.50px;top:657.60px;width:74.50px;height:0;border-top:1px dotted #d8d8c8"></div>
<div class="a" style="left:1496.00px;top:657.60px;width:75.00px;height:0;border-top:1px dotted #d8d8c8"></div>
<div class="a" style="left:1574.00px;top:657.60px;width:76.50px;height:0;border-top:1px dotted #d8d8c8"></div>
<div class="a" style="left:1259.50px;top:667.23px;width:75.50px;height:0;border-top:1px dotted #d8d8c8"></div>
<div class="a" style="left:1338.50px;top:667.23px;width:75.50px;height:0;border-top:1px dotted #d8d8c8"></div>
<div class="a" style="left:1417.50px;top:667.23px;width:74.50px;height:0;border-top:1px dotted #d8d8c8"></div>
<div class="a" style="left:1496.00px;top:667.23px;width:75.00px;height:0;border-top:1px dotted #d8d8c8"></div>
<div class="a" style="left:1574.00px;top:667.23px;width:76.50px;height:0;border-top:1px dotted #d8d8c8"></div>
<div class="a" style="left:1258.50px;top:676.85px;width:76.50px;height:1.00px;background:#d0d070;"></div>
<div class="a" style="left:1337.50px;top:676.85px;width:76.50px;height:1.00px;background:#d0d070;"></div>
<div class="a" style="left:1416.50px;top:676.85px;width:75.50px;height:1.00px;background:#d0d070;"></div>
<div class="a" style="left:1495.00px;top:676.85px;width:76.00px;height:1.00px;background:#d0d070;"></div>
<div class="a" style="left:1573.00px;top:676.85px;width:77.50px;height:1.00px;background:#d0d070;"></div>
<div class="a" style="left:1258.50px;top:686.48px;width:76.50px;height:1.00px;background:#d0d070;"></div>
<div class="a" style="left:1337.50px;top:686.48px;width:76.50px;height:1.00px;background:#d0d070;"></div>
<div class="a" style="left:1416.50px;top:686.48px;width:75.50px;height:1.00px;background:#d0d070;"></div>
<div class="a" style="left:1495.00px;top:686.48px;width:76.00px;height:1.00px;background:#d0d070;"></div>
<div class="a" style="left:1573.00px;top:686.48px;width:77.50px;height:1.00px;background:#d0d070;"></div>
<div class="a" style="left:1258.50px;top:696.10px;width:76.50px;height:1.00px;background:#d0d070;"></div>
<div class="a" style="left:1337.50px;top:696.10px;width:76.50px;height:1.00px;background:#d0d070;"></div>
<div class="a" style="left:1416.50px;top:696.10px;width:75.50px;height:1.00px;background:#d0d070;"></div>
<div class="a" style="left:1495.00px;top:696.10px;width:76.00px;height:1.00px;background:#d0d070;"></div>
<div class="a" style="left:1573.00px;top:696.10px;width:77.50px;height:1.00px;background:#d0d070;"></div>
<div class="a" style="left:1258.50px;top:705.73px;width:76.50px;height:1.00px;background:#d0d070;"></div>
<div class="a" style="left:1337.50px;top:705.73px;width:76.50px;height:1.00px;background:#d0d070;"></div>
<div class="a" style="left:1416.50px;top:705.73px;width:75.50px;height:1.00px;background:#d0d070;"></div>
<div class="a" style="left:1495.00px;top:705.73px;width:76.00px;height:1.00px;background:#d0d070;"></div>
<div class="a" style="left:1573.00px;top:705.73px;width:77.50px;height:1.00px;background:#d0d070;"></div>
<div class="a" style="left:1258.50px;top:715.35px;width:76.50px;height:1.00px;background:#d0d070;"></div>
<div class="a" style="left:1337.50px;top:715.35px;width:76.50px;height:1.00px;background:#d0d070;"></div>
<div class="a" style="left:1416.50px;top:715.35px;width:75.50px;height:1.00px;background:#d0d070;"></div>
<div class="a" style="left:1495.00px;top:715.35px;width:76.00px;height:1.00px;background:#d0d070;"></div>
<div class="a" style="left:1573.00px;top:715.35px;width:77.50px;height:1.00px;background:#d0d070;"></div>
<div class="a" style="left:1258.50px;top:724.98px;width:76.50px;height:1.00px;background:#d0d070;"></div>
<div class="a" style="left:1337.50px;top:724.98px;width:76.50px;height:1.00px;background:#d0d070;"></div>
<div class="a" style="left:1416.50px;top:724.98px;width:75.50px;height:1.00px;background:#d0d070;"></div>
<div class="a" style="left:1495.00px;top:724.98px;width:76.00px;height:1.00px;background:#d0d070;"></div>
<div class="a" style="left:1573.00px;top:724.98px;width:77.50px;height:1.00px;background:#d0d070;"></div>
<div class="a" style="left:1258.50px;top:734.60px;width:76.50px;height:1.00px;background:#d0d070;"></div>
<div class="a" style="left:1337.50px;top:734.60px;width:76.50px;height:1.00px;background:#d0d070;"></div>
<div class="a" style="left:1416.50px;top:734.60px;width:75.50px;height:1.00px;background:#d0d070;"></div>
<div class="a" style="left:1495.00px;top:734.60px;width:76.00px;height:1.00px;background:#d0d070;"></div>
<div class="a" style="left:1573.00px;top:734.60px;width:77.50px;height:1.00px;background:#d0d070;"></div>
<div class="t " style="top:508.20px;font-size:10.8px;color:#333;right:805.20px;">8</div>
<div class="t " style="top:506.12px;font-size:5.2px;color:#666;left:1246.20px;">am</div>
<div class="a" style="left:1246.00px;top:513.23px;width:9.00px;height:1.00px;background:#d8d8d8;"></div>
<div class="a" style="left:1230.00px;top:522.35px;width:25.00px;height:1.00px;background:#c8c8c8;"></div>
<div class="t " style="top:527.45px;font-size:10.8px;color:#333;right:805.20px;">9</div>
<div class="t " style="top:525.37px;font-size:5.2px;color:#666;left:1246.20px;">00</div>
<div class="a" style="left:1246.00px;top:532.48px;width:9.00px;height:1.00px;background:#d8d8d8;"></div>
<div class="a" style="left:1230.00px;top:541.60px;width:25.00px;height:1.00px;background:#c8c8c8;"></div>
<div class="t " style="top:546.70px;font-size:10.8px;color:#333;right:805.20px;">10</div>
<div class="t " style="top:544.62px;font-size:5.2px;color:#666;left:1246.20px;">00</div>
<div class="a" style="left:1246.00px;top:551.73px;width:9.00px;height:1.00px;background:#d8d8d8;"></div>
<div class="a" style="left:1230.00px;top:560.85px;width:25.00px;height:1.00px;background:#c8c8c8;"></div>
<div class="t " style="top:565.95px;font-size:10.8px;color:#333;right:805.20px;">11</div>
<div class="t " style="top:563.87px;font-size:5.2px;color:#666;left:1246.20px;">00</div>
<div class="a" style="left:1246.00px;top:570.98px;width:9.00px;height:1.00px;background:#d8d8d8;"></div>
<div class="a" style="left:1230.00px;top:580.10px;width:25.00px;height:1.00px;background:#c8c8c8;"></div>
<div class="t " style="top:585.20px;font-size:10.8px;color:#333;right:805.20px;">12</div>
<div class="t " style="top:583.12px;font-size:5.2px;color:#666;left:1246.20px;">pm</div>
<div class="a" style="left:1246.00px;top:590.23px;width:9.00px;height:1.00px;background:#d8d8d8;"></div>
<div class="a" style="left:1230.00px;top:599.35px;width:25.00px;height:1.00px;background:#c8c8c8;"></div>
<div class="t " style="top:604.45px;font-size:10.8px;color:#333;right:805.20px;">1</div>
<div class="t " style="top:602.37px;font-size:5.2px;color:#666;left:1246.20px;">00</div>
<div class="a" style="left:1246.00px;top:609.48px;width:9.00px;height:1.00px;background:#d8d8d8;"></div>
<div class="a" style="left:1230.00px;top:618.60px;width:25.00px;height:1.00px;background:#c8c8c8;"></div>
<div class="t " style="top:623.70px;font-size:10.8px;color:#333;right:805.20px;">2</div>
<div class="t " style="top:621.62px;font-size:5.2px;color:#666;left:1246.20px;">00</div>
<div class="a" style="left:1246.00px;top:628.73px;width:9.00px;height:1.00px;background:#d8d8d8;"></div>
<div class="a" style="left:1230.00px;top:637.85px;width:25.00px;height:1.00px;background:#c8c8c8;"></div>
<div class="t " style="top:642.95px;font-size:10.8px;color:#333;right:805.20px;">3</div>
<div class="t " style="top:640.87px;font-size:5.2px;color:#666;left:1246.20px;">00</div>
<div class="a" style="left:1246.00px;top:647.98px;width:9.00px;height:1.00px;background:#d8d8d8;"></div>
<div class="a" style="left:1230.00px;top:657.10px;width:25.00px;height:1.00px;background:#c8c8c8;"></div>
<div class="t " style="top:662.20px;font-size:10.8px;color:#333;right:805.20px;">4</div>
<div class="t " style="top:660.12px;font-size:5.2px;color:#666;left:1246.20px;">00</div>
<div class="a" style="left:1246.00px;top:667.23px;width:9.00px;height:1.00px;background:#d8d8d8;"></div>
<div class="a" style="left:1230.00px;top:676.35px;width:25.00px;height:1.00px;background:#c8c8c8;"></div>
<div class="t " style="top:681.45px;font-size:10.8px;color:#333;right:805.20px;">5</div>
<div class="t " style="top:679.37px;font-size:5.2px;color:#666;left:1246.20px;">00</div>
<div class="a" style="left:1246.00px;top:686.48px;width:9.00px;height:1.00px;background:#d8d8d8;"></div>
<div class="a" style="left:1230.00px;top:695.60px;width:25.00px;height:1.00px;background:#c8c8c8;"></div>
<div class="t " style="top:700.70px;font-size:10.8px;color:#333;right:805.20px;">6</div>
<div class="t " style="top:698.62px;font-size:5.2px;color:#666;left:1246.20px;">00</div>
<div class="a" style="left:1246.00px;top:705.73px;width:9.00px;height:1.00px;background:#d8d8d8;"></div>
<div class="a" style="left:1230.00px;top:714.85px;width:25.00px;height:1.00px;background:#c8c8c8;"></div>
<div class="t " style="top:719.95px;font-size:10.8px;color:#333;right:805.20px;">7</div>
<div class="t " style="top:717.87px;font-size:5.2px;color:#666;left:1246.20px;">00</div>
<div class="a" style="left:1246.00px;top:724.98px;width:9.00px;height:1.00px;background:#d8d8d8;"></div>
<div class="a" style="left:1230.00px;top:734.10px;width:25.00px;height:1.00px;background:#c8c8c8;"></div>
<div class="t " style="top:739.20px;font-size:10.8px;color:#333;right:805.20px;">8</div>
<div class="t " style="top:737.12px;font-size:5.2px;color:#666;left:1246.20px;">00</div>
<div class="a" style="left:1246.00px;top:744.23px;width:9.00px;height:1.00px;background:#d8d8d8;"></div>
<div class="a" style="left:1230.00px;top:753.35px;width:25.00px;height:1.00px;background:#c8c8c8;"></div>
<div class="a" style="left:1226.00px;top:744.00px;width:31.00px;height:1.00px;background:#f0f0f0;"></div>
<div class="a" style="left:1257.50px;top:542.00px;width:74.50px;height:19.00px;background:#fff;border:1px solid #e0e0e0;"></div>
<div class="a" style="left:1257.50px;top:542.00px;width:2.00px;height:19.00px;background:#b8b800;"></div>
<div class="t " style="top:544.40px;font-size:5.5px;color:#555;left:1261.00px;font-family:"Liberation Mono",monospace;letter-spacing:-0.55px;">D.Barrymore - B.Idol [BII-</div>
<div class="t " style="top:550.90px;font-size:5.5px;color:#555;left:1261.00px;font-family:"Liberation Mono",monospace;letter-spacing:-0.55px;">LAUSD:60R]  10:00 AM-1...</div>
<div class="a" style="left:1572.50px;top:532.50px;width:76.50px;height:28.70px;background:#fff;border:1px solid #e0e0e0;"></div>
<div class="a" style="left:1572.50px;top:532.50px;width:2.00px;height:28.70px;background:#b8b800;"></div>
<div class="t " style="top:534.90px;font-size:5.5px;color:#555;left:1576.00px;font-family:"Liberation Mono",monospace;letter-spacing:-0.55px;">D.Barrymore - P.Frank</div>
<div class="t " style="top:541.40px;font-size:5.5px;color:#555;left:1576.00px;font-family:"Liberation Mono",monospace;letter-spacing:-0.55px;">[BID:90R]  9:30 AM-11:00</div>
<div class="t " style="top:547.90px;font-size:5.5px;color:#555;left:1576.00px;font-family:"Liberation Mono",monospace;letter-spacing:-0.55px;">AM</div>
<div class="a" style="left:1414.00px;top:590.50px;width:75.00px;height:18.80px;background:#fff;border:1px solid #e0e0e0;"></div>
<div class="a" style="left:1414.00px;top:590.50px;width:2.00px;height:18.80px;background:#b8b800;"></div>
<div class="t " style="top:592.90px;font-size:5.5px;color:#555;left:1417.50px;font-family:"Liberation Mono",monospace;letter-spacing:-0.55px;">D.Barrymore - L.Gaga [BII-</div>
<div class="t " style="top:599.40px;font-size:5.5px;color:#555;left:1417.50px;font-family:"Liberation Mono",monospace;letter-spacing:-0.55px;">LAUSD:60R]  12:30 PM-1:...</div>
<div class="a" style="left:1492.50px;top:619.40px;width:75.50px;height:18.30px;background:#fff;border:1px solid #e0e0e0;"></div>
<div class="a" style="left:1492.50px;top:619.40px;width:2.00px;height:18.30px;background:#b8b800;"></div>
<div class="t " style="top:621.80px;font-size:5.5px;color:#555;left:1496.00px;font-family:"Liberation Mono",monospace;letter-spacing:-0.55px;">D.Barrymore - R.Downey</div>
<div class="t " style="top:628.30px;font-size:5.5px;color:#555;left:1496.00px;font-family:"Liberation Mono",monospace;letter-spacing:-0.55px;">Jr. [BID:60R]  2:00 PM-3:...</div>
<div class="a" style="left:1651.00px;top:477.00px;width:9.50px;height:267.00px;background:#f0f0f0;"></div>
<div class="a" style="left:1652.00px;top:568.50px;width:7.50px;height:130.00px;background:#cdcdcd;"></div>
<svg class="a" style="left:1651.50px;top:478.00px" width="9" height="7" viewBox="0 0 9 7"><path d="M2,4.8 L4.5,2.3 L7,4.8" stroke="#555" fill="none" stroke-width="0.9"/></svg>
<svg class="a" style="left:1651.50px;top:737.00px" width="9" height="7" viewBox="0 0 9 7"><path d="M2,2.3 L4.5,4.8 L7,2.3" stroke="#555" fill="none" stroke-width="0.9"/></svg>
<div class="a" style="left:1661.00px;top:477.00px;width:81.00px;height:67.50px;background:#fff;"></div>
<div class="t " style="top:478.40px;font-size:9px;color:#222;font-weight:bold;left:1666.00px;transform:translateX(-50%);">‹</div>
<div class="t " style="top:478.40px;font-size:9px;color:#222;font-weight:bold;left:1737.50px;transform:translateX(-50%);">›</div>
<div class="t " style="top:480.02px;font-size:5.7px;color:#444;left:1703.00px;transform:translateX(-50%);">March 2019</div>
<div class="t " style="top:488.26px;font-size:5.6px;color:#444;left:1676.00px;transform:translateX(-50%);">S</div>
<div class="t " style="top:488.26px;font-size:5.6px;color:#444;left:1685.00px;transform:translateX(-50%);">M</div>
<div class="t " style="top:488.26px;font-size:5.6px;color:#444;left:1694.50px;transform:translateX(-50%);">T</div>
<div class="t " style="top:488.26px;font-size:5.6px;color:#444;left:1703.50px;transform:translateX(-50%);">W</div>
<div class="t " style="top:488.26px;font-size:5.6px;color:#444;left:1713.00px;transform:translateX(-50%);">T</div>
<div class="t " style="top:488.26px;font-size:5.6px;color:#444;left:1722.00px;transform:translateX(-50%);">F</div>
<div class="t " style="top:488.26px;font-size:5.6px;color:#444;left:1731.00px;transform:translateX(-50%);">S</div>
<div class="a" style="left:1671.00px;top:494.50px;width:66.00px;height:1.00px;background:#c8c8c8;"></div>
<div class="a" style="left:1671.00px;top:494.50px;width:1.00px;height:50.50px;background:#c8c8c8;"></div>
<div class="a" style="left:1690.50px;top:519.80px;width:8.00px;height:8.00px;background:#e4e4e4;"></div>
<div class="a" style="left:1698.50px;top:519.30px;width:10.00px;height:8.40px;border:1px solid #555;"></div>
<div class="t " style="top:498.96px;font-size:3.6px;color:#777;left:1668.50px;transform:translateX(-50%);">9</div>
<div class="t " style="top:498.08px;font-size:5.8px;color:#777;left:1676.00px;transform:translateX(-50%);">24</div>
<div class="t " style="top:498.08px;font-size:5.8px;color:#777;left:1685.00px;transform:translateX(-50%);">25</div>
<div class="t " style="top:498.08px;font-size:5.8px;color:#777;left:1694.50px;transform:translateX(-50%);">26</div>
<div class="t " style="top:498.08px;font-size:5.8px;color:#777;left:1703.50px;transform:translateX(-50%);">27</div>
<div class="t " style="top:498.08px;font-size:5.8px;color:#777;left:1713.00px;transform:translateX(-50%);">28</div>
<div class="t " style="top:498.08px;font-size:5.8px;color:#333;left:1722.00px;transform:translateX(-50%);">1</div>
<div class="t " style="top:498.08px;font-size:5.8px;color:#333;left:1731.00px;transform:translateX(-50%);">2</div>
<div class="t " style="top:506.86px;font-size:3.6px;color:#777;left:1668.50px;transform:translateX(-50%);">10</div>
<div class="t " style="top:505.98px;font-size:5.8px;color:#333;left:1676.00px;transform:translateX(-50%);">3</div>
<div class="t " style="top:505.98px;font-size:5.8px;color:#333;left:1685.00px;transform:translateX(-50%);">4</div>
<div class="t " style="top:505.98px;font-size:5.8px;color:#333;left:1694.50px;transform:translateX(-50%);">5</div>
<div class="t " style="top:505.98px;font-size:5.8px;color:#333;left:1703.50px;transform:translateX(-50%);">6</div>
<div class="t " style="top:505.98px;font-size:5.8px;color:#333;left:1713.00px;transform:translateX(-50%);">7</div>
<div class="t " style="top:505.98px;font-size:5.8px;color:#333;left:1722.00px;transform:translateX(-50%);">8</div>
<div class="t " style="top:505.98px;font-size:5.8px;color:#333;left:1731.00px;transform:translateX(-50%);">9</div>
<div class="t " style="top:514.96px;font-size:3.6px;color:#777;left:1668.50px;transform:translateX(-50%);">11</div>
<div class="t " style="top:514.08px;font-size:5.8px;color:#333;left:1676.00px;transform:translateX(-50%);">10</div>
<div class="t " style="top:514.08px;font-size:5.8px;color:#333;left:1685.00px;transform:translateX(-50%);">11</div>
<div class="t " style="top:514.08px;font-size:5.8px;color:#333;left:1694.50px;transform:translateX(-50%);">12</div>
<div class="t " style="top:514.08px;font-size:5.8px;color:#333;left:1703.50px;transform:translateX(-50%);">13</div>
<div class="t " style="top:514.08px;font-size:5.8px;color:#333;left:1713.00px;transform:translateX(-50%);">14</div>
<div class="t " style="top:514.08px;font-size:5.8px;color:#333;left:1722.00px;transform:translateX(-50%);">15</div>
<div class="t " style="top:514.08px;font-size:5.8px;color:#333;left:1731.00px;transform:translateX(-50%);">16</div>
<div class="t " style="top:522.86px;font-size:3.6px;color:#777;left:1668.50px;transform:translateX(-50%);">12</div>
<div class="t " style="top:521.98px;font-size:5.8px;color:#333;left:1676.00px;transform:translateX(-50%);">17</div>
<div class="t " style="top:521.98px;font-size:5.8px;color:#333;font-weight:bold;left:1685.00px;transform:translateX(-50%);">18</div>
<div class="t " style="top:521.98px;font-size:5.8px;color:#333;left:1694.50px;transform:translateX(-50%);">19</div>
<div class="t " style="top:521.98px;font-size:5.8px;color:#333;font-weight:bold;left:1703.50px;transform:translateX(-50%);">20</div>
<div class="t " style="top:521.98px;font-size:5.8px;color:#333;font-weight:bold;left:1713.00px;transform:translateX(-50%);">21</div>
<div class="t " style="top:521.98px;font-size:5.8px;color:#333;font-weight:bold;left:1722.00px;transform:translateX(-50%);">22</div>
<div class="t " style="top:521.98px;font-size:5.8px;color:#333;left:1731.00px;transform:translateX(-50%);">23</div>
<div class="t " style="top:530.86px;font-size:3.6px;color:#777;left:1668.50px;transform:translateX(-50%);">13</div>
<div class="t " style="top:529.98px;font-size:5.8px;color:#333;left:1676.00px;transform:translateX(-50%);">24</div>
<div class="t " style="top:529.98px;font-size:5.8px;color:#333;left:1685.00px;transform:translateX(-50%);">25</div>
<div class="t " style="top:529.98px;font-size:5.8px;color:#333;left:1694.50px;transform:translateX(-50%);">26</div>
<div class="t " style="top:529.98px;font-size:5.8px;color:#333;left:1703.50px;transform:translateX(-50%);">27</div>
<div class="t " style="top:529.98px;font-size:5.8px;color:#333;left:1713.00px;transform:translateX(-50%);">28</div>
<div class="t " style="top:529.98px;font-size:5.8px;color:#333;left:1722.00px;transform:translateX(-50%);">29</div>
<div class="t " style="top:529.98px;font-size:5.8px;color:#333;left:1731.00px;transform:translateX(-50%);">30</div>
<div class="t " style="top:539.06px;font-size:3.6px;color:#777;left:1668.50px;transform:translateX(-50%);">14</div>
<div class="t " style="top:538.18px;font-size:5.8px;color:#333;left:1676.00px;transform:translateX(-50%);">31</div>
<div class="t " style="top:538.18px;font-size:5.8px;color:#777;left:1685.00px;transform:translateX(-50%);">1</div>
<div class="t " style="top:538.18px;font-size:5.8px;color:#777;left:1694.50px;transform:translateX(-50%);">2</div>
<div class="t " style="top:538.18px;font-size:5.8px;color:#777;left:1703.50px;transform:translateX(-50%);">3</div>
<div class="t " style="top:538.18px;font-size:5.8px;color:#777;left:1713.00px;transform:translateX(-50%);">4</div>
<div class="t " style="top:538.18px;font-size:5.8px;color:#777;left:1722.00px;transform:translateX(-50%);">5</div>
<div class="t " style="top:538.18px;font-size:5.8px;color:#777;left:1731.00px;transform:translateX(-50%);">6</div>
<div class="a" style="left:1663.00px;top:548.00px;width:27.00px;height:10.00px;background:#fff;border:1px solid #d0d0d0;"></div>
<div class="t " style="top:550.72px;font-size:5.7px;color:#333;left:1676.50px;transform:translateX(-50%);">Contract</div>
<div class="a" style="left:1663.00px;top:557.00px;width:75.50px;height:93.00px;background:#fff;border:1px solid #e0e0e0;"></div>
<div class="a" style="left:1664.00px;top:557.00px;width:25.00px;height:1.50px;background:#fff;"></div>
<div class="t " style="top:559.46px;font-size:5.6px;color:#444;left:1665.50px;">Service:</div>
<div class="t " style="top:568.76px;font-size:5.6px;color:#444;left:1665.50px;">Date:</div>
<div class="t " style="top:577.76px;font-size:5.6px;color:#444;left:1665.50px;">Appt Duration:</div>
<div class="t " style="top:585.76px;font-size:5.6px;color:#444;left:1665.50px;">Appt Service Time:</div>
<div class="t " style="top:593.76px;font-size:5.6px;color:#444;left:1665.50px;">Auth Frequency:</div>
<div class="t " style="top:601.76px;font-size:5.6px;color:#444;left:1665.50px;">Auth Hrs:</div>
<div class="t " style="top:610.46px;font-size:5.6px;color:#444;left:1665.50px;">Projected Hrs:</div>
<div class="t " style="top:618.26px;font-size:5.6px;color:#444;left:1665.50px;">Scheduled S/T Hrs:</div>
<div class="t " style="top:626.46px;font-size:5.6px;color:#444;left:1665.50px;">Rendered S/T Hrs:</div>
<div class="t " style="top:634.56px;font-size:5.6px;color:#444;left:1665.50px;">Remaining Auth Hrs:</div>
<div class="t " style="top:642.76px;font-size:5.6px;color:#444;left:1665.50px;">Remaining Proj Hrs:</div>
<div class="a" style="left:1226.00px;top:744.00px;width:516.00px;height:1.00px;background:#d0d0d0;"></div>
<div class="a" style="left:1226.00px;top:745.00px;width:516.00px;height:11.00px;background:#f0f0f0;"></div>
<div class="a" style="left:1226.00px;top:756.00px;width:516.00px;height:1.00px;background:#9aa0b8;"></div>
<svg class="a" style="left:1734.00px;top:748.00px" width="8" height="8" viewBox="0 0 8 8"><g fill="#999"><rect x="6" y="2" width="1" height="1"/><rect x="4" y="4" width="1" height="1"/><rect x="6" y="4" width="1" height="1"/><rect x="2" y="6" width="1" height="1"/><rect x="4" y="6" width="1" height="1"/><rect x="6" y="6" width="1" height="1"/></g></svg>
</body></html>
